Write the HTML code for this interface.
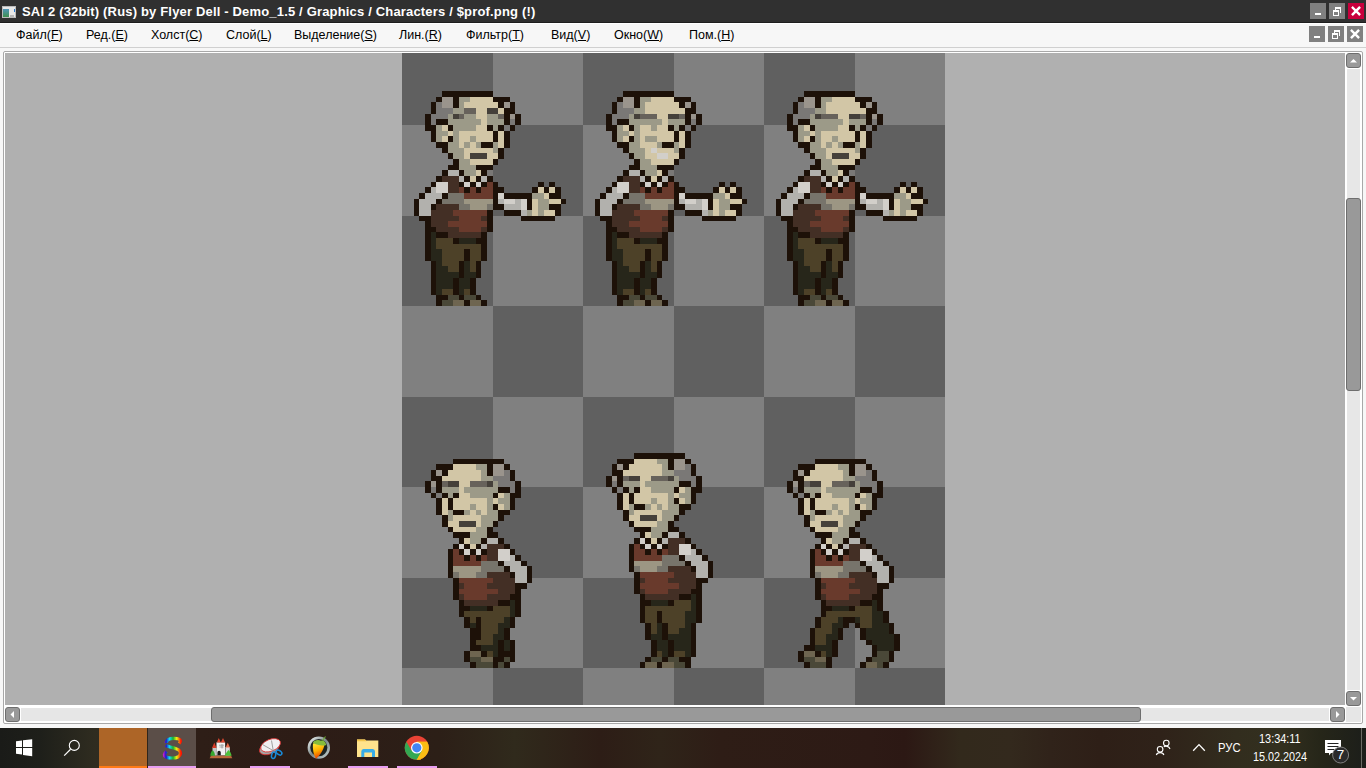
<!DOCTYPE html>
<html><head><meta charset="utf-8">
<style>
*{margin:0;padding:0;box-sizing:border-box}
html,body{width:1366px;height:768px;overflow:hidden;background:#f7f7f7;font-family:"Liberation Sans",sans-serif}
.abs{position:absolute}
#title{left:0;top:0;width:1366px;height:23px;background:#303030}
#title .t{left:22px;top:4px;color:#fff;font-weight:bold;font-size:13px;white-space:nowrap;letter-spacing:0.17px}
.tb{top:3px;width:16px;height:16px;background:#808080}
#menu{left:0;top:22px;width:1366px;height:706px;background:#f7f7f7}
.mi{top:28px;font-size:12.5px;color:#000;white-space:nowrap}
.mb{top:26px;width:16px;height:16px;background:#808080}
#taskbar{left:0;top:728px;width:1366px;height:40px;
background:linear-gradient(90deg,#1a1b18 0.00%,#1e1f1a 2.93%,#2f2c20 6.95%,#2e1e17 14.64%,#2d1c16 21.96%,#2c1f17 32.21%,#302a1c 37.70%,#2d1d16 43.92%,#2f2419 48.32%,#2e1d16 52.71%,#2d1a15 63.69%,#2c1814 66.25%,#32291c 70.28%,#33291d 73.94%,#30231a 76.87%,#2e1f17 80.53%,#2f2219 84.92%,#322d1e 90.48%,#33301f 93.70%,#262619 96.63%,#1c1e1a 100.00%)}
.ul{top:766px;height:2px;background:#e79ef2}
.tray{color:#fff;font-size:12px;white-space:nowrap}
</style></head><body>
<div id="menu" class="abs"></div>
<div id="title" class="abs">
  <div class="abs" style="left:2px;top:6px;width:14px;height:12px;background:#e8e8e8;border:1px solid #bbb"></div>
  <div class="abs" style="left:3px;top:9px;width:6px;height:8px;background:linear-gradient(#4f95b8,#3f9050)"></div><div class="abs" style="left:10px;top:15px;width:4px;height:2px;background:#b8b8b8"></div><div class="abs" style="left:14px;top:9px;width:1px;height:3px;background:#2a7ad0"></div>
  <div class="abs" style="left:0;top:22px;width:1366px;height:1px;background:#1e1e1e"></div>
  <div class="abs t">SAI 2 (32bit) (Rus) by Flyer Dell - Demo_1.5 / Graphics / Characters / $prof.png (!)</div>
  <div class="abs tb" style="left:1310px"><div class="abs" style="left:5px;top:10px;width:6px;height:2px;background:#fff"></div></div>
  <div class="abs tb" style="left:1329px"><svg class="abs" style="left:0;top:0" width="16" height="16"><path fill="#fff" fill-rule="evenodd" d="M6 4H12V10H11V6H7V7H6Z"/><path fill="#fff" fill-rule="evenodd" d="M4 7H10V13H4ZM5 9V12H9V9Z"/></svg></div>
  <div class="abs tb" style="left:1348px;width:16px;background:#c8003c"><svg class="abs" style="left:0;top:0" width="16" height="16"><path d="M4.8 4.8L11.2 11.2M11.2 4.8L4.8 11.2" stroke="#fff" stroke-width="2.4" stroke-linecap="square"/></svg></div>
</div>
<!-- menu items -->
<div class="abs mi" style="left:16px">Файл(<u>F</u>)</div>
<div class="abs mi" style="left:86px">Ред.(<u>E</u>)</div>
<div class="abs mi" style="left:151px">Холст(<u>C</u>)</div>
<div class="abs mi" style="left:226px">Слой(<u>L</u>)</div>
<div class="abs mi" style="left:294px">Выделение(<u>S</u>)</div>
<div class="abs mi" style="left:399px">Лин.(<u>R</u>)</div>
<div class="abs mi" style="left:466px">Фильтр(<u>T</u>)</div>
<div class="abs mi" style="left:551px">Вид(<u>V</u>)</div>
<div class="abs mi" style="left:614px">Окно(<u>W</u>)</div>
<div class="abs mi" style="left:689px">Пом.(<u>H</u>)</div>
<div class="abs mb" style="left:1309px"><div class="abs" style="left:5px;top:10px;width:6px;height:2px;background:#fff"></div></div>
<div class="abs mb" style="left:1328px"><svg class="abs" style="left:0;top:0" width="16" height="16"><path fill="#fff" fill-rule="evenodd" d="M6 4H12V10H11V6H7V7H6Z"/><path fill="#fff" fill-rule="evenodd" d="M4 7H10V13H4ZM5 9V12H9V9Z"/></svg></div>
<div class="abs mb" style="left:1347px"><svg class="abs" style="left:0;top:0" width="16" height="16"><path d="M4.8 4.8L11.2 11.2M11.2 4.8L4.8 11.2" stroke="#fff" stroke-width="2.4" stroke-linecap="square"/></svg></div>
<div class="abs" style="left:0;top:23px;width:1366px;height:1px;background:#fff"></div>
<div class="abs" style="left:0;top:47px;width:1366px;height:1px;background:#d0d0d0"></div>
<!-- frame -->
<div class="abs" style="left:3px;top:51px;width:1360px;height:673px;border:1px solid #a8a8a8;border-radius:2px;background:#fff"></div>
<div id="canvas" class="abs" style="left:5px;top:53px;width:1340px;height:652px;background:#b0b0b0;overflow:hidden">
  <svg id="art" class="abs" style="left:397px;top:-19px" width="543" height="724" viewBox="0 0 96 128" shape-rendering="crispEdges">
    <defs><pattern id="chk" width="32" height="32" patternUnits="userSpaceOnUse">
      <rect width="32" height="32" fill="#808080"/><rect width="16" height="16" fill="#606060"/><rect x="16" y="16" width="16" height="16" fill="#606060"/></pattern></defs>
    <g transform="translate(0.0442 0.0884)"><rect width="96" height="128" fill="#808080"/><rect x="0" y="0" width="16" height="16" fill="#606060"/><rect x="32" y="0" width="16" height="16" fill="#606060"/><rect x="64" y="0" width="16" height="16" fill="#606060"/><rect x="16" y="16" width="16" height="16" fill="#606060"/><rect x="48" y="16" width="16" height="16" fill="#606060"/><rect x="80" y="16" width="16" height="16" fill="#606060"/><rect x="0" y="32" width="16" height="16" fill="#606060"/><rect x="32" y="32" width="16" height="16" fill="#606060"/><rect x="64" y="32" width="16" height="16" fill="#606060"/><rect x="16" y="48" width="16" height="16" fill="#606060"/><rect x="48" y="48" width="16" height="16" fill="#606060"/><rect x="80" y="48" width="16" height="16" fill="#606060"/><rect x="0" y="64" width="16" height="16" fill="#606060"/><rect x="32" y="64" width="16" height="16" fill="#606060"/><rect x="64" y="64" width="16" height="16" fill="#606060"/><rect x="16" y="80" width="16" height="16" fill="#606060"/><rect x="48" y="80" width="16" height="16" fill="#606060"/><rect x="80" y="80" width="16" height="16" fill="#606060"/><rect x="0" y="96" width="16" height="16" fill="#606060"/><rect x="32" y="96" width="16" height="16" fill="#606060"/><rect x="64" y="96" width="16" height="16" fill="#606060"/><rect x="16" y="112" width="16" height="16" fill="#606060"/><rect x="48" y="112" width="16" height="16" fill="#606060"/><rect x="80" y="112" width="16" height="16" fill="#606060"/>
    <g id="sprites">
<rect x="7" y="10" width="9" height="1" fill="#1d1108"/>
<rect x="6" y="11" width="1" height="1" fill="#1d1108"/>
<rect x="7" y="11" width="2" height="1" fill="#9a948c"/>
<rect x="9" y="11" width="1" height="1" fill="#1d1108"/>
<rect x="10" y="11" width="2" height="1" fill="#9c9a88"/>
<rect x="12" y="11" width="4" height="1" fill="#d2c6a6"/>
<rect x="16" y="11" width="3" height="1" fill="#1d1108"/>
<rect x="5" y="12" width="1" height="1" fill="#1d1108"/>
<rect x="6" y="12" width="1" height="1" fill="#7a7876"/>
<rect x="7" y="12" width="2" height="1" fill="#9a948c"/>
<rect x="9" y="12" width="1" height="1" fill="#1d1108"/>
<rect x="10" y="12" width="1" height="1" fill="#9c9a88"/>
<rect x="11" y="12" width="6" height="1" fill="#d2c6a6"/>
<rect x="17" y="12" width="1" height="1" fill="#1d1108"/>
<rect x="18" y="12" width="1" height="1" fill="#9a948c"/>
<rect x="19" y="12" width="1" height="1" fill="#1d1108"/>
<rect x="5" y="13" width="1" height="1" fill="#1d1108"/>
<rect x="6" y="13" width="3" height="1" fill="#7a7876"/>
<rect x="9" y="13" width="2" height="1" fill="#9c9a88"/>
<rect x="11" y="13" width="2" height="1" fill="#67625b"/>
<rect x="13" y="13" width="2" height="1" fill="#d2c6a6"/>
<rect x="15" y="13" width="2" height="1" fill="#45403a"/>
<rect x="17" y="13" width="1" height="1" fill="#d2c6a6"/>
<rect x="18" y="13" width="2" height="1" fill="#1d1108"/>
<rect x="4" y="14" width="1" height="1" fill="#1d1108"/>
<rect x="5" y="14" width="3" height="1" fill="#7a7876"/>
<rect x="8" y="14" width="1" height="1" fill="#9c9a88"/>
<rect x="9" y="14" width="1" height="1" fill="#45403a"/>
<rect x="10" y="14" width="1" height="1" fill="#67625b"/>
<rect x="11" y="14" width="2" height="1" fill="#9c9a88"/>
<rect x="13" y="14" width="2" height="1" fill="#d2c6a6"/>
<rect x="15" y="14" width="2" height="1" fill="#9c9a88"/>
<rect x="17" y="14" width="1" height="1" fill="#67625b"/>
<rect x="18" y="14" width="1" height="1" fill="#1d1108"/>
<rect x="19" y="14" width="1" height="1" fill="#9a948c"/>
<rect x="20" y="14" width="1" height="1" fill="#1d1108"/>
<rect x="4" y="15" width="1" height="1" fill="#1d1108"/>
<rect x="5" y="15" width="1" height="1" fill="#7a7876"/>
<rect x="6" y="15" width="2" height="1" fill="#1d1108"/>
<rect x="8" y="15" width="6" height="1" fill="#9c9a88"/>
<rect x="14" y="15" width="1" height="1" fill="#d2c6a6"/>
<rect x="15" y="15" width="3" height="1" fill="#9c9a88"/>
<rect x="18" y="15" width="1" height="1" fill="#1d1108"/>
<rect x="19" y="15" width="1" height="1" fill="#7a7876"/>
<rect x="20" y="15" width="1" height="1" fill="#1d1108"/>
<rect x="4" y="16" width="2" height="1" fill="#1d1108"/>
<rect x="6" y="16" width="1" height="1" fill="#9c9a88"/>
<rect x="7" y="16" width="1" height="1" fill="#d2c6a6"/>
<rect x="8" y="16" width="1" height="1" fill="#1d1108"/>
<rect x="9" y="16" width="4" height="1" fill="#9c9a88"/>
<rect x="13" y="16" width="2" height="1" fill="#d2c6a6"/>
<rect x="15" y="16" width="1" height="1" fill="#1d1108"/>
<rect x="16" y="16" width="1" height="1" fill="#9c9a88"/>
<rect x="17" y="16" width="1" height="1" fill="#1d1108"/>
<rect x="18" y="16" width="1" height="1" fill="#7a7876"/>
<rect x="19" y="16" width="1" height="1" fill="#1d1108"/>
<rect x="5" y="17" width="1" height="1" fill="#1d1108"/>
<rect x="6" y="17" width="2" height="1" fill="#9c9a88"/>
<rect x="8" y="17" width="1" height="1" fill="#d2c6a6"/>
<rect x="9" y="17" width="1" height="1" fill="#9c9a88"/>
<rect x="10" y="17" width="6" height="1" fill="#d2c6a6"/>
<rect x="16" y="17" width="1" height="1" fill="#1d1108"/>
<rect x="17" y="17" width="1" height="1" fill="#d2c6a6"/>
<rect x="18" y="17" width="1" height="1" fill="#1d1108"/>
<rect x="5" y="18" width="1" height="1" fill="#1d1108"/>
<rect x="6" y="18" width="1" height="1" fill="#9c9a88"/>
<rect x="7" y="18" width="1" height="1" fill="#d2c6a6"/>
<rect x="8" y="18" width="1" height="1" fill="#1d1108"/>
<rect x="9" y="18" width="1" height="1" fill="#9c9a88"/>
<rect x="10" y="18" width="2" height="1" fill="#d2c6a6"/>
<rect x="12" y="18" width="1" height="1" fill="#9c9a88"/>
<rect x="13" y="18" width="3" height="1" fill="#d2c6a6"/>
<rect x="16" y="18" width="1" height="1" fill="#1d1108"/>
<rect x="17" y="18" width="1" height="1" fill="#d2c6a6"/>
<rect x="18" y="18" width="1" height="1" fill="#1d1108"/>
<rect x="6" y="19" width="2" height="1" fill="#1d1108"/>
<rect x="8" y="19" width="2" height="1" fill="#9c9a88"/>
<rect x="10" y="19" width="1" height="1" fill="#d2c6a6"/>
<rect x="11" y="19" width="1" height="1" fill="#9c9a88"/>
<rect x="12" y="19" width="1" height="1" fill="#d2c6a6"/>
<rect x="13" y="19" width="1" height="1" fill="#9c9a88"/>
<rect x="14" y="19" width="2" height="1" fill="#1d1108"/>
<rect x="16" y="19" width="1" height="1" fill="#9c9a88"/>
<rect x="17" y="19" width="1" height="1" fill="#d2c6a6"/>
<rect x="18" y="19" width="1" height="1" fill="#1d1108"/>
<rect x="7" y="20" width="1" height="1" fill="#1d1108"/>
<rect x="8" y="20" width="3" height="1" fill="#9c9a88"/>
<rect x="11" y="20" width="5" height="1" fill="#d2c6a6"/>
<rect x="16" y="20" width="1" height="1" fill="#9c9a88"/>
<rect x="17" y="20" width="1" height="1" fill="#1d1108"/>
<rect x="8" y="21" width="1" height="1" fill="#1d1108"/>
<rect x="9" y="21" width="2" height="1" fill="#9c9a88"/>
<rect x="11" y="21" width="1" height="1" fill="#d2c6a6"/>
<rect x="12" y="21" width="3" height="1" fill="#45403a"/>
<rect x="15" y="21" width="2" height="1" fill="#d2c6a6"/>
<rect x="17" y="21" width="1" height="1" fill="#1d1108"/>
<rect x="9" y="22" width="1" height="1" fill="#1d1108"/>
<rect x="10" y="22" width="2" height="1" fill="#9c9a88"/>
<rect x="12" y="22" width="4" height="1" fill="#d2c6a6"/>
<rect x="16" y="22" width="1" height="1" fill="#1d1108"/>
<rect x="8" y="23" width="2" height="1" fill="#1d1108"/>
<rect x="10" y="23" width="3" height="1" fill="#9c9a88"/>
<rect x="13" y="23" width="3" height="1" fill="#1d1108"/>
<rect x="7" y="24" width="1" height="1" fill="#1d1108"/>
<rect x="8" y="24" width="2" height="1" fill="#b2b1ad"/>
<rect x="10" y="24" width="1" height="1" fill="#1d1108"/>
<rect x="11" y="24" width="2" height="1" fill="#9c9a88"/>
<rect x="13" y="24" width="1" height="1" fill="#d2c6a6"/>
<rect x="14" y="24" width="1" height="1" fill="#1d1108"/>
<rect x="15" y="24" width="1" height="1" fill="#7a7876"/>
<rect x="6" y="25" width="1" height="1" fill="#1d1108"/>
<rect x="7" y="25" width="3" height="1" fill="#432f25"/>
<rect x="10" y="25" width="1" height="1" fill="#b2b1ad"/>
<rect x="11" y="25" width="1" height="1" fill="#1d1108"/>
<rect x="12" y="25" width="1" height="1" fill="#d2c6a6"/>
<rect x="13" y="25" width="1" height="1" fill="#1d1108"/>
<rect x="14" y="25" width="1" height="1" fill="#b2b1ad"/>
<rect x="15" y="25" width="1" height="1" fill="#1d1108"/>
<rect x="5" y="26" width="1" height="1" fill="#1d1108"/>
<rect x="6" y="26" width="2" height="1" fill="#d2cfca"/>
<rect x="8" y="26" width="2" height="1" fill="#432f25"/>
<rect x="10" y="26" width="1" height="1" fill="#1d1108"/>
<rect x="11" y="26" width="1" height="1" fill="#d2cfca"/>
<rect x="12" y="26" width="1" height="1" fill="#1d1108"/>
<rect x="13" y="26" width="1" height="1" fill="#d2cfca"/>
<rect x="14" y="26" width="1" height="1" fill="#1d1108"/>
<rect x="15" y="26" width="1" height="1" fill="#693a2c"/>
<rect x="16" y="26" width="1" height="1" fill="#1d1108"/>
<rect x="24" y="26" width="1" height="1" fill="#1d1108"/>
<rect x="26" y="26" width="1" height="1" fill="#1d1108"/>
<rect x="4" y="27" width="1" height="1" fill="#1d1108"/>
<rect x="5" y="27" width="1" height="1" fill="#b2b1ad"/>
<rect x="6" y="27" width="2" height="1" fill="#d2cfca"/>
<rect x="8" y="27" width="2" height="1" fill="#432f25"/>
<rect x="10" y="27" width="1" height="1" fill="#693a2c"/>
<rect x="11" y="27" width="1" height="1" fill="#1d1108"/>
<rect x="12" y="27" width="1" height="1" fill="#693a2c"/>
<rect x="13" y="27" width="1" height="1" fill="#1d1108"/>
<rect x="14" y="27" width="2" height="1" fill="#693a2c"/>
<rect x="16" y="27" width="2" height="1" fill="#1d1108"/>
<rect x="23" y="27" width="1" height="1" fill="#1d1108"/>
<rect x="24" y="27" width="1" height="1" fill="#d2c6a6"/>
<rect x="25" y="27" width="1" height="1" fill="#1d1108"/>
<rect x="26" y="27" width="1" height="1" fill="#d2c6a6"/>
<rect x="27" y="27" width="1" height="1" fill="#1d1108"/>
<rect x="3" y="28" width="1" height="1" fill="#1d1108"/>
<rect x="4" y="28" width="3" height="1" fill="#b2b1ad"/>
<rect x="7" y="28" width="1" height="1" fill="#1d1108"/>
<rect x="8" y="28" width="3" height="1" fill="#77746b"/>
<rect x="11" y="28" width="5" height="1" fill="#693a2c"/>
<rect x="16" y="28" width="1" height="1" fill="#1d1108"/>
<rect x="17" y="28" width="1" height="1" fill="#d2cfca"/>
<rect x="18" y="28" width="5" height="1" fill="#1d1108"/>
<rect x="23" y="28" width="2" height="1" fill="#9c9a88"/>
<rect x="25" y="28" width="1" height="1" fill="#d2c6a6"/>
<rect x="26" y="28" width="2" height="1" fill="#1d1108"/>
<rect x="2" y="29" width="1" height="1" fill="#1d1108"/>
<rect x="3" y="29" width="3" height="1" fill="#b2b1ad"/>
<rect x="6" y="29" width="1" height="1" fill="#1d1108"/>
<rect x="7" y="29" width="4" height="1" fill="#77746b"/>
<rect x="11" y="29" width="5" height="1" fill="#9c9683"/>
<rect x="16" y="29" width="1" height="1" fill="#1d1108"/>
<rect x="17" y="29" width="1" height="1" fill="#b2b1ad"/>
<rect x="18" y="29" width="2" height="1" fill="#d2cfca"/>
<rect x="20" y="29" width="1" height="1" fill="#b2b1ad"/>
<rect x="21" y="29" width="1" height="1" fill="#d2cfca"/>
<rect x="22" y="29" width="1" height="1" fill="#1d1108"/>
<rect x="23" y="29" width="1" height="1" fill="#d2c6a6"/>
<rect x="24" y="29" width="2" height="1" fill="#9c9a88"/>
<rect x="26" y="29" width="2" height="1" fill="#d2c6a6"/>
<rect x="28" y="29" width="1" height="1" fill="#1d1108"/>
<rect x="2" y="30" width="1" height="1" fill="#1d1108"/>
<rect x="3" y="30" width="2" height="1" fill="#b2b1ad"/>
<rect x="5" y="30" width="1" height="1" fill="#1d1108"/>
<rect x="6" y="30" width="4" height="1" fill="#432f25"/>
<rect x="10" y="30" width="2" height="1" fill="#77746b"/>
<rect x="12" y="30" width="3" height="1" fill="#9c9683"/>
<rect x="15" y="30" width="1" height="1" fill="#77746b"/>
<rect x="16" y="30" width="2" height="1" fill="#1d1108"/>
<rect x="18" y="30" width="3" height="1" fill="#b2b1ad"/>
<rect x="21" y="30" width="1" height="1" fill="#d2cfca"/>
<rect x="22" y="30" width="1" height="1" fill="#1d1108"/>
<rect x="23" y="30" width="1" height="1" fill="#d2c6a6"/>
<rect x="24" y="30" width="2" height="1" fill="#9c9a88"/>
<rect x="26" y="30" width="2" height="1" fill="#1d1108"/>
<rect x="2" y="31" width="1" height="1" fill="#1d1108"/>
<rect x="3" y="31" width="2" height="1" fill="#b2b1ad"/>
<rect x="5" y="31" width="4" height="1" fill="#432f25"/>
<rect x="9" y="31" width="6" height="1" fill="#693a2c"/>
<rect x="15" y="31" width="1" height="1" fill="#1d1108"/>
<rect x="18" y="31" width="3" height="1" fill="#1d1108"/>
<rect x="21" y="31" width="1" height="1" fill="#b2b1ad"/>
<rect x="22" y="31" width="1" height="1" fill="#9c9a88"/>
<rect x="23" y="31" width="1" height="1" fill="#d2c6a6"/>
<rect x="24" y="31" width="1" height="1" fill="#9c9a88"/>
<rect x="25" y="31" width="2" height="1" fill="#d2c6a6"/>
<rect x="27" y="31" width="1" height="1" fill="#1d1108"/>
<rect x="3" y="32" width="2" height="1" fill="#1d1108"/>
<rect x="5" y="32" width="5" height="1" fill="#432f25"/>
<rect x="10" y="32" width="4" height="1" fill="#693a2c"/>
<rect x="14" y="32" width="1" height="1" fill="#432f25"/>
<rect x="15" y="32" width="1" height="1" fill="#1d1108"/>
<rect x="21" y="32" width="6" height="1" fill="#1d1108"/>
<rect x="4" y="33" width="1" height="1" fill="#1d1108"/>
<rect x="5" y="33" width="3" height="1" fill="#432f25"/>
<rect x="8" y="33" width="7" height="1" fill="#693a2c"/>
<rect x="15" y="33" width="1" height="1" fill="#1d1108"/>
<rect x="4" y="34" width="2" height="1" fill="#1d1108"/>
<rect x="6" y="34" width="4" height="1" fill="#432f25"/>
<rect x="10" y="34" width="4" height="1" fill="#693a2c"/>
<rect x="14" y="34" width="1" height="1" fill="#432f25"/>
<rect x="15" y="34" width="1" height="1" fill="#1d1108"/>
<rect x="4" y="35" width="1" height="1" fill="#1d1108"/>
<rect x="5" y="35" width="1" height="1" fill="#27261a"/>
<rect x="6" y="35" width="2" height="1" fill="#1d1108"/>
<rect x="8" y="35" width="6" height="1" fill="#432f25"/>
<rect x="14" y="35" width="1" height="1" fill="#1d1108"/>
<rect x="4" y="36" width="1" height="1" fill="#1d1108"/>
<rect x="5" y="36" width="1" height="1" fill="#27261a"/>
<rect x="6" y="36" width="3" height="1" fill="#4d4128"/>
<rect x="9" y="36" width="1" height="1" fill="#1d1108"/>
<rect x="10" y="36" width="3" height="1" fill="#27261a"/>
<rect x="13" y="36" width="2" height="1" fill="#1d1108"/>
<rect x="4" y="37" width="1" height="1" fill="#1d1108"/>
<rect x="5" y="37" width="1" height="1" fill="#27261a"/>
<rect x="6" y="37" width="8" height="1" fill="#4d4128"/>
<rect x="14" y="37" width="1" height="1" fill="#1d1108"/>
<rect x="4" y="38" width="1" height="1" fill="#1d1108"/>
<rect x="5" y="38" width="2" height="1" fill="#27261a"/>
<rect x="7" y="38" width="4" height="1" fill="#4d4128"/>
<rect x="11" y="38" width="1" height="1" fill="#1d1108"/>
<rect x="12" y="38" width="2" height="1" fill="#4d4128"/>
<rect x="14" y="38" width="1" height="1" fill="#1d1108"/>
<rect x="4" y="39" width="1" height="1" fill="#1d1108"/>
<rect x="5" y="39" width="2" height="1" fill="#27261a"/>
<rect x="7" y="39" width="4" height="1" fill="#4d4128"/>
<rect x="11" y="39" width="1" height="1" fill="#1d1108"/>
<rect x="12" y="39" width="2" height="1" fill="#4d4128"/>
<rect x="14" y="39" width="1" height="1" fill="#1d1108"/>
<rect x="5" y="40" width="1" height="1" fill="#1d1108"/>
<rect x="6" y="40" width="1" height="1" fill="#27261a"/>
<rect x="7" y="40" width="3" height="1" fill="#4d4128"/>
<rect x="10" y="40" width="1" height="1" fill="#1d1108"/>
<rect x="11" y="40" width="1" height="1" fill="#27261a"/>
<rect x="12" y="40" width="1" height="1" fill="#4d4128"/>
<rect x="13" y="40" width="1" height="1" fill="#1d1108"/>
<rect x="5" y="41" width="1" height="1" fill="#1d1108"/>
<rect x="6" y="41" width="2" height="1" fill="#27261a"/>
<rect x="8" y="41" width="2" height="1" fill="#4d4128"/>
<rect x="10" y="41" width="1" height="1" fill="#1d1108"/>
<rect x="11" y="41" width="1" height="1" fill="#27261a"/>
<rect x="12" y="41" width="1" height="1" fill="#4d4128"/>
<rect x="13" y="41" width="1" height="1" fill="#1d1108"/>
<rect x="5" y="42" width="1" height="1" fill="#1d1108"/>
<rect x="6" y="42" width="4" height="1" fill="#27261a"/>
<rect x="10" y="42" width="1" height="1" fill="#1d1108"/>
<rect x="11" y="42" width="2" height="1" fill="#27261a"/>
<rect x="13" y="42" width="1" height="1" fill="#1d1108"/>
<rect x="5" y="43" width="1" height="1" fill="#1d1108"/>
<rect x="6" y="43" width="3" height="1" fill="#27261a"/>
<rect x="9" y="43" width="1" height="1" fill="#1d1108"/>
<rect x="10" y="43" width="2" height="1" fill="#27261a"/>
<rect x="12" y="43" width="1" height="1" fill="#1d1108"/>
<rect x="5" y="44" width="1" height="1" fill="#1d1108"/>
<rect x="6" y="44" width="3" height="1" fill="#27261a"/>
<rect x="9" y="44" width="1" height="1" fill="#1d1108"/>
<rect x="10" y="44" width="2" height="1" fill="#27261a"/>
<rect x="12" y="44" width="1" height="1" fill="#1d1108"/>
<rect x="5" y="45" width="1" height="1" fill="#1d1108"/>
<rect x="6" y="45" width="1" height="1" fill="#27261a"/>
<rect x="7" y="45" width="2" height="1" fill="#4d4128"/>
<rect x="9" y="45" width="1" height="1" fill="#1d1108"/>
<rect x="10" y="45" width="1" height="1" fill="#27261a"/>
<rect x="11" y="45" width="1" height="1" fill="#4d4128"/>
<rect x="12" y="45" width="1" height="1" fill="#1d1108"/>
<rect x="6" y="46" width="2" height="1" fill="#1d1108"/>
<rect x="8" y="46" width="2" height="1" fill="#4a4838"/>
<rect x="10" y="46" width="1" height="1" fill="#1d1108"/>
<rect x="11" y="46" width="2" height="1" fill="#4a4838"/>
<rect x="13" y="46" width="1" height="1" fill="#1d1108"/>
<rect x="6" y="47" width="1" height="1" fill="#1d1108"/>
<rect x="7" y="47" width="2" height="1" fill="#4a4838"/>
<rect x="9" y="47" width="2" height="1" fill="#6e6550"/>
<rect x="11" y="47" width="1" height="1" fill="#1d1108"/>
<rect x="12" y="47" width="2" height="1" fill="#6e6550"/>
<rect x="14" y="47" width="1" height="1" fill="#1d1108"/>
<rect x="39" y="10" width="9" height="1" fill="#1d1108"/>
<rect x="38" y="11" width="1" height="1" fill="#1d1108"/>
<rect x="39" y="11" width="2" height="1" fill="#9a948c"/>
<rect x="41" y="11" width="1" height="1" fill="#1d1108"/>
<rect x="42" y="11" width="2" height="1" fill="#9c9a88"/>
<rect x="44" y="11" width="4" height="1" fill="#d2c6a6"/>
<rect x="48" y="11" width="3" height="1" fill="#1d1108"/>
<rect x="37" y="12" width="1" height="1" fill="#1d1108"/>
<rect x="38" y="12" width="1" height="1" fill="#7a7876"/>
<rect x="39" y="12" width="2" height="1" fill="#9a948c"/>
<rect x="41" y="12" width="1" height="1" fill="#1d1108"/>
<rect x="42" y="12" width="1" height="1" fill="#9c9a88"/>
<rect x="43" y="12" width="6" height="1" fill="#d2c6a6"/>
<rect x="49" y="12" width="1" height="1" fill="#1d1108"/>
<rect x="50" y="12" width="1" height="1" fill="#9a948c"/>
<rect x="51" y="12" width="1" height="1" fill="#1d1108"/>
<rect x="37" y="13" width="1" height="1" fill="#1d1108"/>
<rect x="38" y="13" width="3" height="1" fill="#7a7876"/>
<rect x="41" y="13" width="2" height="1" fill="#9c9a88"/>
<rect x="43" y="13" width="7" height="1" fill="#d2c6a6"/>
<rect x="50" y="13" width="2" height="1" fill="#1d1108"/>
<rect x="36" y="14" width="1" height="1" fill="#1d1108"/>
<rect x="37" y="14" width="3" height="1" fill="#7a7876"/>
<rect x="40" y="14" width="1" height="1" fill="#9c9a88"/>
<rect x="41" y="14" width="1" height="1" fill="#45403a"/>
<rect x="42" y="14" width="3" height="1" fill="#67625b"/>
<rect x="45" y="14" width="2" height="1" fill="#d2c6a6"/>
<rect x="47" y="14" width="2" height="1" fill="#45403a"/>
<rect x="49" y="14" width="1" height="1" fill="#67625b"/>
<rect x="50" y="14" width="1" height="1" fill="#1d1108"/>
<rect x="51" y="14" width="1" height="1" fill="#9a948c"/>
<rect x="52" y="14" width="1" height="1" fill="#1d1108"/>
<rect x="36" y="15" width="1" height="1" fill="#1d1108"/>
<rect x="37" y="15" width="1" height="1" fill="#7a7876"/>
<rect x="38" y="15" width="2" height="1" fill="#1d1108"/>
<rect x="40" y="15" width="6" height="1" fill="#9c9a88"/>
<rect x="46" y="15" width="1" height="1" fill="#d2c6a6"/>
<rect x="47" y="15" width="3" height="1" fill="#9c9a88"/>
<rect x="50" y="15" width="1" height="1" fill="#1d1108"/>
<rect x="51" y="15" width="1" height="1" fill="#7a7876"/>
<rect x="52" y="15" width="1" height="1" fill="#1d1108"/>
<rect x="36" y="16" width="2" height="1" fill="#1d1108"/>
<rect x="38" y="16" width="1" height="1" fill="#9c9a88"/>
<rect x="39" y="16" width="1" height="1" fill="#d2c6a6"/>
<rect x="40" y="16" width="1" height="1" fill="#1d1108"/>
<rect x="41" y="16" width="1" height="1" fill="#9c9a88"/>
<rect x="42" y="16" width="2" height="1" fill="#d2c6a6"/>
<rect x="44" y="16" width="1" height="1" fill="#9c9a88"/>
<rect x="45" y="16" width="2" height="1" fill="#d2c6a6"/>
<rect x="47" y="16" width="1" height="1" fill="#1d1108"/>
<rect x="48" y="16" width="1" height="1" fill="#9c9a88"/>
<rect x="49" y="16" width="1" height="1" fill="#1d1108"/>
<rect x="50" y="16" width="1" height="1" fill="#7a7876"/>
<rect x="51" y="16" width="1" height="1" fill="#1d1108"/>
<rect x="37" y="17" width="1" height="1" fill="#1d1108"/>
<rect x="38" y="17" width="2" height="1" fill="#9c9a88"/>
<rect x="40" y="17" width="1" height="1" fill="#d2c6a6"/>
<rect x="41" y="17" width="1" height="1" fill="#9c9a88"/>
<rect x="42" y="17" width="6" height="1" fill="#d2c6a6"/>
<rect x="48" y="17" width="1" height="1" fill="#1d1108"/>
<rect x="49" y="17" width="1" height="1" fill="#d2c6a6"/>
<rect x="50" y="17" width="1" height="1" fill="#1d1108"/>
<rect x="37" y="18" width="1" height="1" fill="#1d1108"/>
<rect x="38" y="18" width="1" height="1" fill="#9c9a88"/>
<rect x="39" y="18" width="1" height="1" fill="#d2c6a6"/>
<rect x="40" y="18" width="1" height="1" fill="#1d1108"/>
<rect x="41" y="18" width="1" height="1" fill="#9c9a88"/>
<rect x="42" y="18" width="1" height="1" fill="#d2c6a6"/>
<rect x="43" y="18" width="2" height="1" fill="#9c9a88"/>
<rect x="45" y="18" width="3" height="1" fill="#d2c6a6"/>
<rect x="48" y="18" width="1" height="1" fill="#1d1108"/>
<rect x="49" y="18" width="1" height="1" fill="#d2c6a6"/>
<rect x="50" y="18" width="1" height="1" fill="#1d1108"/>
<rect x="38" y="19" width="2" height="1" fill="#1d1108"/>
<rect x="40" y="19" width="2" height="1" fill="#9c9a88"/>
<rect x="42" y="19" width="3" height="1" fill="#d2c6a6"/>
<rect x="45" y="19" width="1" height="1" fill="#9c9a88"/>
<rect x="46" y="19" width="2" height="1" fill="#1d1108"/>
<rect x="48" y="19" width="1" height="1" fill="#9c9a88"/>
<rect x="49" y="19" width="1" height="1" fill="#d2c6a6"/>
<rect x="50" y="19" width="1" height="1" fill="#1d1108"/>
<rect x="39" y="20" width="1" height="1" fill="#1d1108"/>
<rect x="40" y="20" width="3" height="1" fill="#9c9a88"/>
<rect x="43" y="20" width="1" height="1" fill="#d2c6a6"/>
<rect x="44" y="20" width="1" height="1" fill="#d2cfca"/>
<rect x="45" y="20" width="3" height="1" fill="#d2c6a6"/>
<rect x="48" y="20" width="1" height="1" fill="#9c9a88"/>
<rect x="49" y="20" width="1" height="1" fill="#1d1108"/>
<rect x="40" y="21" width="1" height="1" fill="#1d1108"/>
<rect x="41" y="21" width="2" height="1" fill="#9c9a88"/>
<rect x="43" y="21" width="2" height="1" fill="#d2c6a6"/>
<rect x="45" y="21" width="2" height="1" fill="#d2cfca"/>
<rect x="47" y="21" width="2" height="1" fill="#d2c6a6"/>
<rect x="49" y="21" width="1" height="1" fill="#1d1108"/>
<rect x="41" y="22" width="1" height="1" fill="#1d1108"/>
<rect x="42" y="22" width="2" height="1" fill="#9c9a88"/>
<rect x="44" y="22" width="4" height="1" fill="#d2c6a6"/>
<rect x="48" y="22" width="1" height="1" fill="#1d1108"/>
<rect x="40" y="23" width="2" height="1" fill="#1d1108"/>
<rect x="42" y="23" width="3" height="1" fill="#9c9a88"/>
<rect x="45" y="23" width="3" height="1" fill="#1d1108"/>
<rect x="39" y="24" width="1" height="1" fill="#1d1108"/>
<rect x="40" y="24" width="2" height="1" fill="#b2b1ad"/>
<rect x="42" y="24" width="1" height="1" fill="#1d1108"/>
<rect x="43" y="24" width="2" height="1" fill="#9c9a88"/>
<rect x="45" y="24" width="1" height="1" fill="#d2c6a6"/>
<rect x="46" y="24" width="1" height="1" fill="#1d1108"/>
<rect x="47" y="24" width="1" height="1" fill="#7a7876"/>
<rect x="38" y="25" width="1" height="1" fill="#1d1108"/>
<rect x="39" y="25" width="3" height="1" fill="#432f25"/>
<rect x="42" y="25" width="1" height="1" fill="#b2b1ad"/>
<rect x="43" y="25" width="1" height="1" fill="#1d1108"/>
<rect x="44" y="25" width="1" height="1" fill="#d2c6a6"/>
<rect x="45" y="25" width="1" height="1" fill="#1d1108"/>
<rect x="46" y="25" width="1" height="1" fill="#b2b1ad"/>
<rect x="47" y="25" width="1" height="1" fill="#1d1108"/>
<rect x="37" y="26" width="1" height="1" fill="#1d1108"/>
<rect x="38" y="26" width="2" height="1" fill="#d2cfca"/>
<rect x="40" y="26" width="2" height="1" fill="#432f25"/>
<rect x="42" y="26" width="1" height="1" fill="#1d1108"/>
<rect x="43" y="26" width="1" height="1" fill="#d2cfca"/>
<rect x="44" y="26" width="1" height="1" fill="#1d1108"/>
<rect x="45" y="26" width="1" height="1" fill="#d2cfca"/>
<rect x="46" y="26" width="1" height="1" fill="#1d1108"/>
<rect x="47" y="26" width="1" height="1" fill="#693a2c"/>
<rect x="48" y="26" width="1" height="1" fill="#1d1108"/>
<rect x="56" y="26" width="1" height="1" fill="#1d1108"/>
<rect x="58" y="26" width="1" height="1" fill="#1d1108"/>
<rect x="36" y="27" width="1" height="1" fill="#1d1108"/>
<rect x="37" y="27" width="1" height="1" fill="#b2b1ad"/>
<rect x="38" y="27" width="2" height="1" fill="#d2cfca"/>
<rect x="40" y="27" width="2" height="1" fill="#432f25"/>
<rect x="42" y="27" width="1" height="1" fill="#693a2c"/>
<rect x="43" y="27" width="1" height="1" fill="#1d1108"/>
<rect x="44" y="27" width="1" height="1" fill="#693a2c"/>
<rect x="45" y="27" width="1" height="1" fill="#1d1108"/>
<rect x="46" y="27" width="2" height="1" fill="#693a2c"/>
<rect x="48" y="27" width="2" height="1" fill="#1d1108"/>
<rect x="55" y="27" width="1" height="1" fill="#1d1108"/>
<rect x="56" y="27" width="1" height="1" fill="#d2c6a6"/>
<rect x="57" y="27" width="1" height="1" fill="#1d1108"/>
<rect x="58" y="27" width="1" height="1" fill="#d2c6a6"/>
<rect x="59" y="27" width="1" height="1" fill="#1d1108"/>
<rect x="35" y="28" width="1" height="1" fill="#1d1108"/>
<rect x="36" y="28" width="3" height="1" fill="#b2b1ad"/>
<rect x="39" y="28" width="1" height="1" fill="#1d1108"/>
<rect x="40" y="28" width="3" height="1" fill="#77746b"/>
<rect x="43" y="28" width="5" height="1" fill="#693a2c"/>
<rect x="48" y="28" width="1" height="1" fill="#1d1108"/>
<rect x="49" y="28" width="1" height="1" fill="#d2cfca"/>
<rect x="50" y="28" width="5" height="1" fill="#1d1108"/>
<rect x="55" y="28" width="2" height="1" fill="#9c9a88"/>
<rect x="57" y="28" width="1" height="1" fill="#d2c6a6"/>
<rect x="58" y="28" width="2" height="1" fill="#1d1108"/>
<rect x="34" y="29" width="1" height="1" fill="#1d1108"/>
<rect x="35" y="29" width="3" height="1" fill="#b2b1ad"/>
<rect x="38" y="29" width="1" height="1" fill="#1d1108"/>
<rect x="39" y="29" width="4" height="1" fill="#77746b"/>
<rect x="43" y="29" width="5" height="1" fill="#9c9683"/>
<rect x="48" y="29" width="1" height="1" fill="#1d1108"/>
<rect x="49" y="29" width="1" height="1" fill="#b2b1ad"/>
<rect x="50" y="29" width="2" height="1" fill="#d2cfca"/>
<rect x="52" y="29" width="1" height="1" fill="#b2b1ad"/>
<rect x="53" y="29" width="1" height="1" fill="#d2cfca"/>
<rect x="54" y="29" width="1" height="1" fill="#1d1108"/>
<rect x="55" y="29" width="1" height="1" fill="#d2c6a6"/>
<rect x="56" y="29" width="2" height="1" fill="#9c9a88"/>
<rect x="58" y="29" width="2" height="1" fill="#d2c6a6"/>
<rect x="60" y="29" width="1" height="1" fill="#1d1108"/>
<rect x="34" y="30" width="1" height="1" fill="#1d1108"/>
<rect x="35" y="30" width="2" height="1" fill="#b2b1ad"/>
<rect x="37" y="30" width="1" height="1" fill="#1d1108"/>
<rect x="38" y="30" width="4" height="1" fill="#432f25"/>
<rect x="42" y="30" width="2" height="1" fill="#77746b"/>
<rect x="44" y="30" width="3" height="1" fill="#9c9683"/>
<rect x="47" y="30" width="1" height="1" fill="#77746b"/>
<rect x="48" y="30" width="2" height="1" fill="#1d1108"/>
<rect x="50" y="30" width="3" height="1" fill="#b2b1ad"/>
<rect x="53" y="30" width="1" height="1" fill="#d2cfca"/>
<rect x="54" y="30" width="1" height="1" fill="#1d1108"/>
<rect x="55" y="30" width="1" height="1" fill="#d2c6a6"/>
<rect x="56" y="30" width="2" height="1" fill="#9c9a88"/>
<rect x="58" y="30" width="2" height="1" fill="#1d1108"/>
<rect x="34" y="31" width="1" height="1" fill="#1d1108"/>
<rect x="35" y="31" width="2" height="1" fill="#b2b1ad"/>
<rect x="37" y="31" width="4" height="1" fill="#432f25"/>
<rect x="41" y="31" width="6" height="1" fill="#693a2c"/>
<rect x="47" y="31" width="1" height="1" fill="#1d1108"/>
<rect x="50" y="31" width="3" height="1" fill="#1d1108"/>
<rect x="53" y="31" width="1" height="1" fill="#b2b1ad"/>
<rect x="54" y="31" width="1" height="1" fill="#9c9a88"/>
<rect x="55" y="31" width="1" height="1" fill="#d2c6a6"/>
<rect x="56" y="31" width="1" height="1" fill="#9c9a88"/>
<rect x="57" y="31" width="2" height="1" fill="#d2c6a6"/>
<rect x="59" y="31" width="1" height="1" fill="#1d1108"/>
<rect x="35" y="32" width="2" height="1" fill="#1d1108"/>
<rect x="37" y="32" width="5" height="1" fill="#432f25"/>
<rect x="42" y="32" width="4" height="1" fill="#693a2c"/>
<rect x="46" y="32" width="1" height="1" fill="#432f25"/>
<rect x="47" y="32" width="1" height="1" fill="#1d1108"/>
<rect x="53" y="32" width="6" height="1" fill="#1d1108"/>
<rect x="36" y="33" width="1" height="1" fill="#1d1108"/>
<rect x="37" y="33" width="3" height="1" fill="#432f25"/>
<rect x="40" y="33" width="7" height="1" fill="#693a2c"/>
<rect x="47" y="33" width="1" height="1" fill="#1d1108"/>
<rect x="36" y="34" width="2" height="1" fill="#1d1108"/>
<rect x="38" y="34" width="4" height="1" fill="#432f25"/>
<rect x="42" y="34" width="4" height="1" fill="#693a2c"/>
<rect x="46" y="34" width="1" height="1" fill="#432f25"/>
<rect x="47" y="34" width="1" height="1" fill="#1d1108"/>
<rect x="36" y="35" width="1" height="1" fill="#1d1108"/>
<rect x="37" y="35" width="1" height="1" fill="#27261a"/>
<rect x="38" y="35" width="2" height="1" fill="#1d1108"/>
<rect x="40" y="35" width="6" height="1" fill="#432f25"/>
<rect x="46" y="35" width="1" height="1" fill="#1d1108"/>
<rect x="36" y="36" width="1" height="1" fill="#1d1108"/>
<rect x="37" y="36" width="1" height="1" fill="#27261a"/>
<rect x="38" y="36" width="3" height="1" fill="#4d4128"/>
<rect x="41" y="36" width="1" height="1" fill="#1d1108"/>
<rect x="42" y="36" width="3" height="1" fill="#27261a"/>
<rect x="45" y="36" width="2" height="1" fill="#1d1108"/>
<rect x="36" y="37" width="1" height="1" fill="#1d1108"/>
<rect x="37" y="37" width="1" height="1" fill="#27261a"/>
<rect x="38" y="37" width="8" height="1" fill="#4d4128"/>
<rect x="46" y="37" width="1" height="1" fill="#1d1108"/>
<rect x="36" y="38" width="1" height="1" fill="#1d1108"/>
<rect x="37" y="38" width="2" height="1" fill="#27261a"/>
<rect x="39" y="38" width="4" height="1" fill="#4d4128"/>
<rect x="43" y="38" width="1" height="1" fill="#1d1108"/>
<rect x="44" y="38" width="2" height="1" fill="#4d4128"/>
<rect x="46" y="38" width="1" height="1" fill="#1d1108"/>
<rect x="36" y="39" width="1" height="1" fill="#1d1108"/>
<rect x="37" y="39" width="2" height="1" fill="#27261a"/>
<rect x="39" y="39" width="4" height="1" fill="#4d4128"/>
<rect x="43" y="39" width="1" height="1" fill="#1d1108"/>
<rect x="44" y="39" width="2" height="1" fill="#4d4128"/>
<rect x="46" y="39" width="1" height="1" fill="#1d1108"/>
<rect x="37" y="40" width="1" height="1" fill="#1d1108"/>
<rect x="38" y="40" width="1" height="1" fill="#27261a"/>
<rect x="39" y="40" width="3" height="1" fill="#4d4128"/>
<rect x="42" y="40" width="1" height="1" fill="#1d1108"/>
<rect x="43" y="40" width="1" height="1" fill="#27261a"/>
<rect x="44" y="40" width="1" height="1" fill="#4d4128"/>
<rect x="45" y="40" width="1" height="1" fill="#1d1108"/>
<rect x="37" y="41" width="1" height="1" fill="#1d1108"/>
<rect x="38" y="41" width="2" height="1" fill="#27261a"/>
<rect x="40" y="41" width="2" height="1" fill="#4d4128"/>
<rect x="42" y="41" width="1" height="1" fill="#1d1108"/>
<rect x="43" y="41" width="1" height="1" fill="#27261a"/>
<rect x="44" y="41" width="1" height="1" fill="#4d4128"/>
<rect x="45" y="41" width="1" height="1" fill="#1d1108"/>
<rect x="37" y="42" width="1" height="1" fill="#1d1108"/>
<rect x="38" y="42" width="4" height="1" fill="#27261a"/>
<rect x="42" y="42" width="1" height="1" fill="#1d1108"/>
<rect x="43" y="42" width="2" height="1" fill="#27261a"/>
<rect x="45" y="42" width="1" height="1" fill="#1d1108"/>
<rect x="37" y="43" width="1" height="1" fill="#1d1108"/>
<rect x="38" y="43" width="3" height="1" fill="#27261a"/>
<rect x="41" y="43" width="1" height="1" fill="#1d1108"/>
<rect x="42" y="43" width="2" height="1" fill="#27261a"/>
<rect x="44" y="43" width="1" height="1" fill="#1d1108"/>
<rect x="37" y="44" width="1" height="1" fill="#1d1108"/>
<rect x="38" y="44" width="3" height="1" fill="#27261a"/>
<rect x="41" y="44" width="1" height="1" fill="#1d1108"/>
<rect x="42" y="44" width="2" height="1" fill="#27261a"/>
<rect x="44" y="44" width="1" height="1" fill="#1d1108"/>
<rect x="37" y="45" width="1" height="1" fill="#1d1108"/>
<rect x="38" y="45" width="1" height="1" fill="#27261a"/>
<rect x="39" y="45" width="2" height="1" fill="#4d4128"/>
<rect x="41" y="45" width="1" height="1" fill="#1d1108"/>
<rect x="42" y="45" width="1" height="1" fill="#27261a"/>
<rect x="43" y="45" width="1" height="1" fill="#4d4128"/>
<rect x="44" y="45" width="1" height="1" fill="#1d1108"/>
<rect x="38" y="46" width="2" height="1" fill="#1d1108"/>
<rect x="40" y="46" width="2" height="1" fill="#4a4838"/>
<rect x="42" y="46" width="1" height="1" fill="#1d1108"/>
<rect x="43" y="46" width="2" height="1" fill="#4a4838"/>
<rect x="45" y="46" width="1" height="1" fill="#1d1108"/>
<rect x="38" y="47" width="1" height="1" fill="#1d1108"/>
<rect x="39" y="47" width="2" height="1" fill="#4a4838"/>
<rect x="41" y="47" width="2" height="1" fill="#6e6550"/>
<rect x="43" y="47" width="1" height="1" fill="#1d1108"/>
<rect x="44" y="47" width="2" height="1" fill="#6e6550"/>
<rect x="46" y="47" width="1" height="1" fill="#1d1108"/>
<rect x="71" y="10" width="9" height="1" fill="#1d1108"/>
<rect x="70" y="11" width="1" height="1" fill="#1d1108"/>
<rect x="71" y="11" width="2" height="1" fill="#9a948c"/>
<rect x="73" y="11" width="1" height="1" fill="#1d1108"/>
<rect x="74" y="11" width="2" height="1" fill="#9c9a88"/>
<rect x="76" y="11" width="4" height="1" fill="#d2c6a6"/>
<rect x="80" y="11" width="3" height="1" fill="#1d1108"/>
<rect x="69" y="12" width="1" height="1" fill="#1d1108"/>
<rect x="70" y="12" width="1" height="1" fill="#7a7876"/>
<rect x="71" y="12" width="2" height="1" fill="#9a948c"/>
<rect x="73" y="12" width="1" height="1" fill="#1d1108"/>
<rect x="74" y="12" width="1" height="1" fill="#9c9a88"/>
<rect x="75" y="12" width="6" height="1" fill="#d2c6a6"/>
<rect x="81" y="12" width="1" height="1" fill="#1d1108"/>
<rect x="82" y="12" width="1" height="1" fill="#9a948c"/>
<rect x="83" y="12" width="1" height="1" fill="#1d1108"/>
<rect x="69" y="13" width="1" height="1" fill="#1d1108"/>
<rect x="70" y="13" width="3" height="1" fill="#7a7876"/>
<rect x="73" y="13" width="2" height="1" fill="#9c9a88"/>
<rect x="75" y="13" width="7" height="1" fill="#d2c6a6"/>
<rect x="82" y="13" width="2" height="1" fill="#1d1108"/>
<rect x="68" y="14" width="1" height="1" fill="#1d1108"/>
<rect x="69" y="14" width="3" height="1" fill="#7a7876"/>
<rect x="72" y="14" width="1" height="1" fill="#9c9a88"/>
<rect x="73" y="14" width="1" height="1" fill="#45403a"/>
<rect x="74" y="14" width="3" height="1" fill="#67625b"/>
<rect x="77" y="14" width="2" height="1" fill="#d2c6a6"/>
<rect x="79" y="14" width="2" height="1" fill="#45403a"/>
<rect x="81" y="14" width="1" height="1" fill="#67625b"/>
<rect x="82" y="14" width="1" height="1" fill="#1d1108"/>
<rect x="83" y="14" width="1" height="1" fill="#9a948c"/>
<rect x="84" y="14" width="1" height="1" fill="#1d1108"/>
<rect x="68" y="15" width="1" height="1" fill="#1d1108"/>
<rect x="69" y="15" width="1" height="1" fill="#7a7876"/>
<rect x="70" y="15" width="2" height="1" fill="#1d1108"/>
<rect x="72" y="15" width="6" height="1" fill="#9c9a88"/>
<rect x="78" y="15" width="1" height="1" fill="#d2c6a6"/>
<rect x="79" y="15" width="3" height="1" fill="#9c9a88"/>
<rect x="82" y="15" width="1" height="1" fill="#1d1108"/>
<rect x="83" y="15" width="1" height="1" fill="#7a7876"/>
<rect x="84" y="15" width="1" height="1" fill="#1d1108"/>
<rect x="68" y="16" width="2" height="1" fill="#1d1108"/>
<rect x="70" y="16" width="1" height="1" fill="#9c9a88"/>
<rect x="71" y="16" width="1" height="1" fill="#d2c6a6"/>
<rect x="72" y="16" width="1" height="1" fill="#1d1108"/>
<rect x="73" y="16" width="4" height="1" fill="#9c9a88"/>
<rect x="77" y="16" width="2" height="1" fill="#d2c6a6"/>
<rect x="79" y="16" width="1" height="1" fill="#1d1108"/>
<rect x="80" y="16" width="1" height="1" fill="#9c9a88"/>
<rect x="81" y="16" width="1" height="1" fill="#1d1108"/>
<rect x="82" y="16" width="1" height="1" fill="#7a7876"/>
<rect x="83" y="16" width="1" height="1" fill="#1d1108"/>
<rect x="69" y="17" width="1" height="1" fill="#1d1108"/>
<rect x="70" y="17" width="2" height="1" fill="#9c9a88"/>
<rect x="72" y="17" width="1" height="1" fill="#d2c6a6"/>
<rect x="73" y="17" width="1" height="1" fill="#9c9a88"/>
<rect x="74" y="17" width="6" height="1" fill="#d2c6a6"/>
<rect x="80" y="17" width="1" height="1" fill="#1d1108"/>
<rect x="81" y="17" width="1" height="1" fill="#d2c6a6"/>
<rect x="82" y="17" width="1" height="1" fill="#1d1108"/>
<rect x="69" y="18" width="1" height="1" fill="#1d1108"/>
<rect x="70" y="18" width="1" height="1" fill="#9c9a88"/>
<rect x="71" y="18" width="1" height="1" fill="#d2c6a6"/>
<rect x="72" y="18" width="1" height="1" fill="#1d1108"/>
<rect x="73" y="18" width="1" height="1" fill="#9c9a88"/>
<rect x="74" y="18" width="2" height="1" fill="#d2c6a6"/>
<rect x="76" y="18" width="1" height="1" fill="#9c9a88"/>
<rect x="77" y="18" width="3" height="1" fill="#d2c6a6"/>
<rect x="80" y="18" width="1" height="1" fill="#1d1108"/>
<rect x="81" y="18" width="1" height="1" fill="#d2c6a6"/>
<rect x="82" y="18" width="1" height="1" fill="#1d1108"/>
<rect x="70" y="19" width="2" height="1" fill="#1d1108"/>
<rect x="72" y="19" width="2" height="1" fill="#9c9a88"/>
<rect x="74" y="19" width="1" height="1" fill="#d2c6a6"/>
<rect x="75" y="19" width="1" height="1" fill="#9c9a88"/>
<rect x="76" y="19" width="1" height="1" fill="#d2c6a6"/>
<rect x="77" y="19" width="1" height="1" fill="#9c9a88"/>
<rect x="78" y="19" width="2" height="1" fill="#1d1108"/>
<rect x="80" y="19" width="1" height="1" fill="#9c9a88"/>
<rect x="81" y="19" width="1" height="1" fill="#d2c6a6"/>
<rect x="82" y="19" width="1" height="1" fill="#1d1108"/>
<rect x="71" y="20" width="1" height="1" fill="#1d1108"/>
<rect x="72" y="20" width="3" height="1" fill="#9c9a88"/>
<rect x="75" y="20" width="5" height="1" fill="#d2c6a6"/>
<rect x="80" y="20" width="1" height="1" fill="#9c9a88"/>
<rect x="81" y="20" width="1" height="1" fill="#1d1108"/>
<rect x="72" y="21" width="1" height="1" fill="#1d1108"/>
<rect x="73" y="21" width="2" height="1" fill="#9c9a88"/>
<rect x="75" y="21" width="1" height="1" fill="#d2c6a6"/>
<rect x="76" y="21" width="3" height="1" fill="#45403a"/>
<rect x="79" y="21" width="2" height="1" fill="#d2c6a6"/>
<rect x="81" y="21" width="1" height="1" fill="#1d1108"/>
<rect x="73" y="22" width="1" height="1" fill="#1d1108"/>
<rect x="74" y="22" width="2" height="1" fill="#9c9a88"/>
<rect x="76" y="22" width="4" height="1" fill="#d2c6a6"/>
<rect x="80" y="22" width="1" height="1" fill="#1d1108"/>
<rect x="72" y="23" width="2" height="1" fill="#1d1108"/>
<rect x="74" y="23" width="3" height="1" fill="#9c9a88"/>
<rect x="77" y="23" width="3" height="1" fill="#1d1108"/>
<rect x="71" y="24" width="1" height="1" fill="#1d1108"/>
<rect x="72" y="24" width="2" height="1" fill="#b2b1ad"/>
<rect x="74" y="24" width="1" height="1" fill="#1d1108"/>
<rect x="75" y="24" width="2" height="1" fill="#9c9a88"/>
<rect x="77" y="24" width="1" height="1" fill="#d2c6a6"/>
<rect x="78" y="24" width="1" height="1" fill="#1d1108"/>
<rect x="79" y="24" width="1" height="1" fill="#7a7876"/>
<rect x="70" y="25" width="1" height="1" fill="#1d1108"/>
<rect x="71" y="25" width="3" height="1" fill="#432f25"/>
<rect x="74" y="25" width="1" height="1" fill="#b2b1ad"/>
<rect x="75" y="25" width="1" height="1" fill="#1d1108"/>
<rect x="76" y="25" width="1" height="1" fill="#d2c6a6"/>
<rect x="77" y="25" width="1" height="1" fill="#1d1108"/>
<rect x="78" y="25" width="1" height="1" fill="#b2b1ad"/>
<rect x="79" y="25" width="1" height="1" fill="#1d1108"/>
<rect x="69" y="26" width="1" height="1" fill="#1d1108"/>
<rect x="70" y="26" width="2" height="1" fill="#d2cfca"/>
<rect x="72" y="26" width="2" height="1" fill="#432f25"/>
<rect x="74" y="26" width="1" height="1" fill="#1d1108"/>
<rect x="75" y="26" width="1" height="1" fill="#d2cfca"/>
<rect x="76" y="26" width="1" height="1" fill="#1d1108"/>
<rect x="77" y="26" width="1" height="1" fill="#d2cfca"/>
<rect x="78" y="26" width="1" height="1" fill="#1d1108"/>
<rect x="79" y="26" width="1" height="1" fill="#693a2c"/>
<rect x="80" y="26" width="1" height="1" fill="#1d1108"/>
<rect x="88" y="26" width="1" height="1" fill="#1d1108"/>
<rect x="90" y="26" width="1" height="1" fill="#1d1108"/>
<rect x="68" y="27" width="1" height="1" fill="#1d1108"/>
<rect x="69" y="27" width="1" height="1" fill="#b2b1ad"/>
<rect x="70" y="27" width="2" height="1" fill="#d2cfca"/>
<rect x="72" y="27" width="2" height="1" fill="#432f25"/>
<rect x="74" y="27" width="1" height="1" fill="#693a2c"/>
<rect x="75" y="27" width="1" height="1" fill="#1d1108"/>
<rect x="76" y="27" width="1" height="1" fill="#693a2c"/>
<rect x="77" y="27" width="1" height="1" fill="#1d1108"/>
<rect x="78" y="27" width="2" height="1" fill="#693a2c"/>
<rect x="80" y="27" width="2" height="1" fill="#1d1108"/>
<rect x="87" y="27" width="1" height="1" fill="#1d1108"/>
<rect x="88" y="27" width="1" height="1" fill="#d2c6a6"/>
<rect x="89" y="27" width="1" height="1" fill="#1d1108"/>
<rect x="90" y="27" width="1" height="1" fill="#d2c6a6"/>
<rect x="91" y="27" width="1" height="1" fill="#1d1108"/>
<rect x="67" y="28" width="1" height="1" fill="#1d1108"/>
<rect x="68" y="28" width="3" height="1" fill="#b2b1ad"/>
<rect x="71" y="28" width="1" height="1" fill="#1d1108"/>
<rect x="72" y="28" width="3" height="1" fill="#77746b"/>
<rect x="75" y="28" width="5" height="1" fill="#693a2c"/>
<rect x="80" y="28" width="1" height="1" fill="#1d1108"/>
<rect x="81" y="28" width="1" height="1" fill="#d2cfca"/>
<rect x="82" y="28" width="5" height="1" fill="#1d1108"/>
<rect x="87" y="28" width="2" height="1" fill="#9c9a88"/>
<rect x="89" y="28" width="1" height="1" fill="#d2c6a6"/>
<rect x="90" y="28" width="2" height="1" fill="#1d1108"/>
<rect x="66" y="29" width="1" height="1" fill="#1d1108"/>
<rect x="67" y="29" width="3" height="1" fill="#b2b1ad"/>
<rect x="70" y="29" width="1" height="1" fill="#1d1108"/>
<rect x="71" y="29" width="4" height="1" fill="#77746b"/>
<rect x="75" y="29" width="5" height="1" fill="#9c9683"/>
<rect x="80" y="29" width="1" height="1" fill="#1d1108"/>
<rect x="81" y="29" width="1" height="1" fill="#b2b1ad"/>
<rect x="82" y="29" width="2" height="1" fill="#d2cfca"/>
<rect x="84" y="29" width="1" height="1" fill="#b2b1ad"/>
<rect x="85" y="29" width="1" height="1" fill="#d2cfca"/>
<rect x="86" y="29" width="1" height="1" fill="#1d1108"/>
<rect x="87" y="29" width="1" height="1" fill="#d2c6a6"/>
<rect x="88" y="29" width="2" height="1" fill="#9c9a88"/>
<rect x="90" y="29" width="2" height="1" fill="#d2c6a6"/>
<rect x="92" y="29" width="1" height="1" fill="#1d1108"/>
<rect x="66" y="30" width="1" height="1" fill="#1d1108"/>
<rect x="67" y="30" width="2" height="1" fill="#b2b1ad"/>
<rect x="69" y="30" width="1" height="1" fill="#1d1108"/>
<rect x="70" y="30" width="4" height="1" fill="#432f25"/>
<rect x="74" y="30" width="2" height="1" fill="#77746b"/>
<rect x="76" y="30" width="3" height="1" fill="#9c9683"/>
<rect x="79" y="30" width="1" height="1" fill="#77746b"/>
<rect x="80" y="30" width="2" height="1" fill="#1d1108"/>
<rect x="82" y="30" width="3" height="1" fill="#b2b1ad"/>
<rect x="85" y="30" width="1" height="1" fill="#d2cfca"/>
<rect x="86" y="30" width="1" height="1" fill="#1d1108"/>
<rect x="87" y="30" width="1" height="1" fill="#d2c6a6"/>
<rect x="88" y="30" width="2" height="1" fill="#9c9a88"/>
<rect x="90" y="30" width="2" height="1" fill="#1d1108"/>
<rect x="66" y="31" width="1" height="1" fill="#1d1108"/>
<rect x="67" y="31" width="2" height="1" fill="#b2b1ad"/>
<rect x="69" y="31" width="4" height="1" fill="#432f25"/>
<rect x="73" y="31" width="6" height="1" fill="#693a2c"/>
<rect x="79" y="31" width="1" height="1" fill="#1d1108"/>
<rect x="82" y="31" width="3" height="1" fill="#1d1108"/>
<rect x="85" y="31" width="1" height="1" fill="#b2b1ad"/>
<rect x="86" y="31" width="1" height="1" fill="#9c9a88"/>
<rect x="87" y="31" width="1" height="1" fill="#d2c6a6"/>
<rect x="88" y="31" width="1" height="1" fill="#9c9a88"/>
<rect x="89" y="31" width="2" height="1" fill="#d2c6a6"/>
<rect x="91" y="31" width="1" height="1" fill="#1d1108"/>
<rect x="67" y="32" width="2" height="1" fill="#1d1108"/>
<rect x="69" y="32" width="5" height="1" fill="#432f25"/>
<rect x="74" y="32" width="4" height="1" fill="#693a2c"/>
<rect x="78" y="32" width="1" height="1" fill="#432f25"/>
<rect x="79" y="32" width="1" height="1" fill="#1d1108"/>
<rect x="85" y="32" width="6" height="1" fill="#1d1108"/>
<rect x="68" y="33" width="1" height="1" fill="#1d1108"/>
<rect x="69" y="33" width="3" height="1" fill="#432f25"/>
<rect x="72" y="33" width="7" height="1" fill="#693a2c"/>
<rect x="79" y="33" width="1" height="1" fill="#1d1108"/>
<rect x="68" y="34" width="2" height="1" fill="#1d1108"/>
<rect x="70" y="34" width="4" height="1" fill="#432f25"/>
<rect x="74" y="34" width="4" height="1" fill="#693a2c"/>
<rect x="78" y="34" width="1" height="1" fill="#432f25"/>
<rect x="79" y="34" width="1" height="1" fill="#1d1108"/>
<rect x="68" y="35" width="1" height="1" fill="#1d1108"/>
<rect x="69" y="35" width="1" height="1" fill="#27261a"/>
<rect x="70" y="35" width="2" height="1" fill="#1d1108"/>
<rect x="72" y="35" width="6" height="1" fill="#432f25"/>
<rect x="78" y="35" width="1" height="1" fill="#1d1108"/>
<rect x="68" y="36" width="1" height="1" fill="#1d1108"/>
<rect x="69" y="36" width="1" height="1" fill="#27261a"/>
<rect x="70" y="36" width="3" height="1" fill="#4d4128"/>
<rect x="73" y="36" width="1" height="1" fill="#1d1108"/>
<rect x="74" y="36" width="3" height="1" fill="#27261a"/>
<rect x="77" y="36" width="2" height="1" fill="#1d1108"/>
<rect x="68" y="37" width="1" height="1" fill="#1d1108"/>
<rect x="69" y="37" width="1" height="1" fill="#27261a"/>
<rect x="70" y="37" width="8" height="1" fill="#4d4128"/>
<rect x="78" y="37" width="1" height="1" fill="#1d1108"/>
<rect x="68" y="38" width="1" height="1" fill="#1d1108"/>
<rect x="69" y="38" width="2" height="1" fill="#27261a"/>
<rect x="71" y="38" width="4" height="1" fill="#4d4128"/>
<rect x="75" y="38" width="1" height="1" fill="#1d1108"/>
<rect x="76" y="38" width="2" height="1" fill="#4d4128"/>
<rect x="78" y="38" width="1" height="1" fill="#1d1108"/>
<rect x="68" y="39" width="1" height="1" fill="#1d1108"/>
<rect x="69" y="39" width="2" height="1" fill="#27261a"/>
<rect x="71" y="39" width="4" height="1" fill="#4d4128"/>
<rect x="75" y="39" width="1" height="1" fill="#1d1108"/>
<rect x="76" y="39" width="2" height="1" fill="#4d4128"/>
<rect x="78" y="39" width="1" height="1" fill="#1d1108"/>
<rect x="69" y="40" width="1" height="1" fill="#1d1108"/>
<rect x="70" y="40" width="1" height="1" fill="#27261a"/>
<rect x="71" y="40" width="3" height="1" fill="#4d4128"/>
<rect x="74" y="40" width="1" height="1" fill="#1d1108"/>
<rect x="75" y="40" width="1" height="1" fill="#27261a"/>
<rect x="76" y="40" width="1" height="1" fill="#4d4128"/>
<rect x="77" y="40" width="1" height="1" fill="#1d1108"/>
<rect x="69" y="41" width="1" height="1" fill="#1d1108"/>
<rect x="70" y="41" width="2" height="1" fill="#27261a"/>
<rect x="72" y="41" width="2" height="1" fill="#4d4128"/>
<rect x="74" y="41" width="1" height="1" fill="#1d1108"/>
<rect x="75" y="41" width="1" height="1" fill="#27261a"/>
<rect x="76" y="41" width="1" height="1" fill="#4d4128"/>
<rect x="77" y="41" width="1" height="1" fill="#1d1108"/>
<rect x="69" y="42" width="1" height="1" fill="#1d1108"/>
<rect x="70" y="42" width="4" height="1" fill="#27261a"/>
<rect x="74" y="42" width="1" height="1" fill="#1d1108"/>
<rect x="75" y="42" width="2" height="1" fill="#27261a"/>
<rect x="77" y="42" width="1" height="1" fill="#1d1108"/>
<rect x="69" y="43" width="1" height="1" fill="#1d1108"/>
<rect x="70" y="43" width="3" height="1" fill="#27261a"/>
<rect x="73" y="43" width="1" height="1" fill="#1d1108"/>
<rect x="74" y="43" width="2" height="1" fill="#27261a"/>
<rect x="76" y="43" width="1" height="1" fill="#1d1108"/>
<rect x="69" y="44" width="1" height="1" fill="#1d1108"/>
<rect x="70" y="44" width="3" height="1" fill="#27261a"/>
<rect x="73" y="44" width="1" height="1" fill="#1d1108"/>
<rect x="74" y="44" width="2" height="1" fill="#27261a"/>
<rect x="76" y="44" width="1" height="1" fill="#1d1108"/>
<rect x="69" y="45" width="1" height="1" fill="#1d1108"/>
<rect x="70" y="45" width="1" height="1" fill="#27261a"/>
<rect x="71" y="45" width="2" height="1" fill="#4d4128"/>
<rect x="73" y="45" width="1" height="1" fill="#1d1108"/>
<rect x="74" y="45" width="1" height="1" fill="#27261a"/>
<rect x="75" y="45" width="1" height="1" fill="#4d4128"/>
<rect x="76" y="45" width="1" height="1" fill="#1d1108"/>
<rect x="70" y="46" width="2" height="1" fill="#1d1108"/>
<rect x="72" y="46" width="2" height="1" fill="#4a4838"/>
<rect x="74" y="46" width="1" height="1" fill="#1d1108"/>
<rect x="75" y="46" width="2" height="1" fill="#4a4838"/>
<rect x="77" y="46" width="1" height="1" fill="#1d1108"/>
<rect x="70" y="47" width="1" height="1" fill="#1d1108"/>
<rect x="71" y="47" width="2" height="1" fill="#4a4838"/>
<rect x="73" y="47" width="2" height="1" fill="#6e6550"/>
<rect x="75" y="47" width="1" height="1" fill="#1d1108"/>
<rect x="76" y="47" width="2" height="1" fill="#6e6550"/>
<rect x="78" y="47" width="1" height="1" fill="#1d1108"/>
<rect x="9" y="75" width="9" height="1" fill="#1d1108"/>
<rect x="6" y="76" width="3" height="1" fill="#1d1108"/>
<rect x="9" y="76" width="4" height="1" fill="#d2c6a6"/>
<rect x="13" y="76" width="2" height="1" fill="#9c9a88"/>
<rect x="15" y="76" width="1" height="1" fill="#1d1108"/>
<rect x="16" y="76" width="2" height="1" fill="#9a948c"/>
<rect x="18" y="76" width="1" height="1" fill="#1d1108"/>
<rect x="5" y="77" width="1" height="1" fill="#1d1108"/>
<rect x="6" y="77" width="1" height="1" fill="#9a948c"/>
<rect x="7" y="77" width="1" height="1" fill="#1d1108"/>
<rect x="8" y="77" width="6" height="1" fill="#d2c6a6"/>
<rect x="14" y="77" width="1" height="1" fill="#9c9a88"/>
<rect x="15" y="77" width="1" height="1" fill="#1d1108"/>
<rect x="16" y="77" width="2" height="1" fill="#9a948c"/>
<rect x="18" y="77" width="1" height="1" fill="#7a7876"/>
<rect x="19" y="77" width="1" height="1" fill="#1d1108"/>
<rect x="5" y="78" width="2" height="1" fill="#1d1108"/>
<rect x="7" y="78" width="7" height="1" fill="#d2c6a6"/>
<rect x="14" y="78" width="2" height="1" fill="#9c9a88"/>
<rect x="16" y="78" width="3" height="1" fill="#7a7876"/>
<rect x="19" y="78" width="1" height="1" fill="#1d1108"/>
<rect x="4" y="79" width="1" height="1" fill="#1d1108"/>
<rect x="5" y="79" width="1" height="1" fill="#9a948c"/>
<rect x="6" y="79" width="1" height="1" fill="#1d1108"/>
<rect x="7" y="79" width="1" height="1" fill="#67625b"/>
<rect x="8" y="79" width="2" height="1" fill="#45403a"/>
<rect x="10" y="79" width="2" height="1" fill="#d2c6a6"/>
<rect x="12" y="79" width="3" height="1" fill="#67625b"/>
<rect x="15" y="79" width="1" height="1" fill="#45403a"/>
<rect x="16" y="79" width="1" height="1" fill="#9c9a88"/>
<rect x="17" y="79" width="3" height="1" fill="#7a7876"/>
<rect x="20" y="79" width="1" height="1" fill="#1d1108"/>
<rect x="4" y="80" width="1" height="1" fill="#1d1108"/>
<rect x="5" y="80" width="1" height="1" fill="#7a7876"/>
<rect x="6" y="80" width="1" height="1" fill="#1d1108"/>
<rect x="7" y="80" width="3" height="1" fill="#9c9a88"/>
<rect x="10" y="80" width="1" height="1" fill="#d2c6a6"/>
<rect x="11" y="80" width="6" height="1" fill="#9c9a88"/>
<rect x="17" y="80" width="2" height="1" fill="#1d1108"/>
<rect x="19" y="80" width="1" height="1" fill="#7a7876"/>
<rect x="20" y="80" width="1" height="1" fill="#1d1108"/>
<rect x="5" y="81" width="1" height="1" fill="#1d1108"/>
<rect x="6" y="81" width="1" height="1" fill="#7a7876"/>
<rect x="7" y="81" width="1" height="1" fill="#1d1108"/>
<rect x="8" y="81" width="1" height="1" fill="#9c9a88"/>
<rect x="9" y="81" width="1" height="1" fill="#1d1108"/>
<rect x="10" y="81" width="2" height="1" fill="#d2c6a6"/>
<rect x="12" y="81" width="4" height="1" fill="#9c9a88"/>
<rect x="16" y="81" width="1" height="1" fill="#1d1108"/>
<rect x="17" y="81" width="1" height="1" fill="#d2c6a6"/>
<rect x="18" y="81" width="1" height="1" fill="#9c9a88"/>
<rect x="19" y="81" width="2" height="1" fill="#1d1108"/>
<rect x="6" y="82" width="1" height="1" fill="#1d1108"/>
<rect x="7" y="82" width="1" height="1" fill="#d2c6a6"/>
<rect x="8" y="82" width="1" height="1" fill="#1d1108"/>
<rect x="9" y="82" width="6" height="1" fill="#d2c6a6"/>
<rect x="15" y="82" width="1" height="1" fill="#9c9a88"/>
<rect x="16" y="82" width="1" height="1" fill="#d2c6a6"/>
<rect x="17" y="82" width="2" height="1" fill="#9c9a88"/>
<rect x="19" y="82" width="1" height="1" fill="#1d1108"/>
<rect x="6" y="83" width="1" height="1" fill="#1d1108"/>
<rect x="7" y="83" width="1" height="1" fill="#d2c6a6"/>
<rect x="8" y="83" width="1" height="1" fill="#1d1108"/>
<rect x="9" y="83" width="3" height="1" fill="#d2c6a6"/>
<rect x="12" y="83" width="1" height="1" fill="#9c9a88"/>
<rect x="13" y="83" width="2" height="1" fill="#d2c6a6"/>
<rect x="15" y="83" width="1" height="1" fill="#9c9a88"/>
<rect x="16" y="83" width="1" height="1" fill="#1d1108"/>
<rect x="17" y="83" width="1" height="1" fill="#d2c6a6"/>
<rect x="18" y="83" width="1" height="1" fill="#9c9a88"/>
<rect x="19" y="83" width="1" height="1" fill="#1d1108"/>
<rect x="6" y="84" width="1" height="1" fill="#1d1108"/>
<rect x="7" y="84" width="1" height="1" fill="#d2c6a6"/>
<rect x="8" y="84" width="1" height="1" fill="#9c9a88"/>
<rect x="9" y="84" width="2" height="1" fill="#1d1108"/>
<rect x="11" y="84" width="1" height="1" fill="#9c9a88"/>
<rect x="12" y="84" width="1" height="1" fill="#d2c6a6"/>
<rect x="13" y="84" width="1" height="1" fill="#9c9a88"/>
<rect x="14" y="84" width="1" height="1" fill="#d2c6a6"/>
<rect x="15" y="84" width="2" height="1" fill="#9c9a88"/>
<rect x="17" y="84" width="2" height="1" fill="#1d1108"/>
<rect x="7" y="85" width="1" height="1" fill="#1d1108"/>
<rect x="8" y="85" width="1" height="1" fill="#9c9a88"/>
<rect x="9" y="85" width="5" height="1" fill="#d2c6a6"/>
<rect x="14" y="85" width="3" height="1" fill="#9c9a88"/>
<rect x="17" y="85" width="1" height="1" fill="#1d1108"/>
<rect x="7" y="86" width="1" height="1" fill="#1d1108"/>
<rect x="8" y="86" width="2" height="1" fill="#d2c6a6"/>
<rect x="10" y="86" width="3" height="1" fill="#45403a"/>
<rect x="13" y="86" width="1" height="1" fill="#d2c6a6"/>
<rect x="14" y="86" width="2" height="1" fill="#9c9a88"/>
<rect x="16" y="86" width="1" height="1" fill="#1d1108"/>
<rect x="8" y="87" width="1" height="1" fill="#1d1108"/>
<rect x="9" y="87" width="4" height="1" fill="#d2c6a6"/>
<rect x="13" y="87" width="2" height="1" fill="#9c9a88"/>
<rect x="15" y="87" width="1" height="1" fill="#1d1108"/>
<rect x="9" y="88" width="3" height="1" fill="#1d1108"/>
<rect x="12" y="88" width="3" height="1" fill="#9c9a88"/>
<rect x="15" y="88" width="2" height="1" fill="#1d1108"/>
<rect x="10" y="89" width="1" height="1" fill="#1d1108"/>
<rect x="11" y="89" width="1" height="1" fill="#d2c6a6"/>
<rect x="12" y="89" width="2" height="1" fill="#9c9a88"/>
<rect x="14" y="89" width="1" height="1" fill="#1d1108"/>
<rect x="15" y="89" width="2" height="1" fill="#b2b1ad"/>
<rect x="17" y="89" width="1" height="1" fill="#1d1108"/>
<rect x="9" y="90" width="1" height="1" fill="#1d1108"/>
<rect x="10" y="90" width="1" height="1" fill="#d2cfca"/>
<rect x="11" y="90" width="1" height="1" fill="#1d1108"/>
<rect x="12" y="90" width="1" height="1" fill="#d2c6a6"/>
<rect x="13" y="90" width="1" height="1" fill="#1d1108"/>
<rect x="14" y="90" width="1" height="1" fill="#b2b1ad"/>
<rect x="15" y="90" width="3" height="1" fill="#432f25"/>
<rect x="18" y="90" width="1" height="1" fill="#1d1108"/>
<rect x="8" y="91" width="1" height="1" fill="#1d1108"/>
<rect x="9" y="91" width="1" height="1" fill="#693a2c"/>
<rect x="10" y="91" width="1" height="1" fill="#1d1108"/>
<rect x="11" y="91" width="1" height="1" fill="#d2cfca"/>
<rect x="12" y="91" width="1" height="1" fill="#1d1108"/>
<rect x="13" y="91" width="1" height="1" fill="#d2cfca"/>
<rect x="14" y="91" width="1" height="1" fill="#1d1108"/>
<rect x="15" y="91" width="2" height="1" fill="#432f25"/>
<rect x="17" y="91" width="2" height="1" fill="#d2cfca"/>
<rect x="19" y="91" width="1" height="1" fill="#1d1108"/>
<rect x="8" y="92" width="1" height="1" fill="#1d1108"/>
<rect x="9" y="92" width="2" height="1" fill="#693a2c"/>
<rect x="11" y="92" width="1" height="1" fill="#1d1108"/>
<rect x="12" y="92" width="1" height="1" fill="#693a2c"/>
<rect x="13" y="92" width="1" height="1" fill="#1d1108"/>
<rect x="14" y="92" width="1" height="1" fill="#693a2c"/>
<rect x="15" y="92" width="2" height="1" fill="#432f25"/>
<rect x="17" y="92" width="2" height="1" fill="#d2cfca"/>
<rect x="19" y="92" width="1" height="1" fill="#b2b1ad"/>
<rect x="20" y="92" width="1" height="1" fill="#1d1108"/>
<rect x="8" y="93" width="1" height="1" fill="#1d1108"/>
<rect x="9" y="93" width="5" height="1" fill="#693a2c"/>
<rect x="14" y="93" width="3" height="1" fill="#77746b"/>
<rect x="17" y="93" width="1" height="1" fill="#1d1108"/>
<rect x="18" y="93" width="3" height="1" fill="#b2b1ad"/>
<rect x="21" y="93" width="1" height="1" fill="#1d1108"/>
<rect x="8" y="94" width="1" height="1" fill="#1d1108"/>
<rect x="9" y="94" width="5" height="1" fill="#9c9683"/>
<rect x="14" y="94" width="4" height="1" fill="#77746b"/>
<rect x="18" y="94" width="1" height="1" fill="#1d1108"/>
<rect x="19" y="94" width="3" height="1" fill="#b2b1ad"/>
<rect x="22" y="94" width="1" height="1" fill="#1d1108"/>
<rect x="8" y="95" width="1" height="1" fill="#1d1108"/>
<rect x="9" y="95" width="1" height="1" fill="#77746b"/>
<rect x="10" y="95" width="3" height="1" fill="#9c9683"/>
<rect x="13" y="95" width="2" height="1" fill="#77746b"/>
<rect x="15" y="95" width="4" height="1" fill="#432f25"/>
<rect x="19" y="95" width="1" height="1" fill="#1d1108"/>
<rect x="20" y="95" width="2" height="1" fill="#b2b1ad"/>
<rect x="22" y="95" width="1" height="1" fill="#1d1108"/>
<rect x="9" y="96" width="1" height="1" fill="#1d1108"/>
<rect x="10" y="96" width="6" height="1" fill="#693a2c"/>
<rect x="16" y="96" width="4" height="1" fill="#432f25"/>
<rect x="20" y="96" width="2" height="1" fill="#b2b1ad"/>
<rect x="22" y="96" width="1" height="1" fill="#1d1108"/>
<rect x="9" y="97" width="1" height="1" fill="#1d1108"/>
<rect x="10" y="97" width="1" height="1" fill="#432f25"/>
<rect x="11" y="97" width="4" height="1" fill="#693a2c"/>
<rect x="15" y="97" width="5" height="1" fill="#432f25"/>
<rect x="20" y="97" width="2" height="1" fill="#1d1108"/>
<rect x="9" y="98" width="1" height="1" fill="#1d1108"/>
<rect x="10" y="98" width="7" height="1" fill="#693a2c"/>
<rect x="17" y="98" width="3" height="1" fill="#432f25"/>
<rect x="20" y="98" width="1" height="1" fill="#1d1108"/>
<rect x="9" y="99" width="1" height="1" fill="#1d1108"/>
<rect x="10" y="99" width="1" height="1" fill="#432f25"/>
<rect x="11" y="99" width="4" height="1" fill="#693a2c"/>
<rect x="15" y="99" width="4" height="1" fill="#432f25"/>
<rect x="19" y="99" width="2" height="1" fill="#1d1108"/>
<rect x="10" y="100" width="1" height="1" fill="#1d1108"/>
<rect x="11" y="100" width="6" height="1" fill="#432f25"/>
<rect x="17" y="100" width="2" height="1" fill="#1d1108"/>
<rect x="19" y="100" width="1" height="1" fill="#27261a"/>
<rect x="20" y="100" width="1" height="1" fill="#1d1108"/>
<rect x="10" y="101" width="2" height="1" fill="#1d1108"/>
<rect x="12" y="101" width="3" height="1" fill="#27261a"/>
<rect x="15" y="101" width="1" height="1" fill="#1d1108"/>
<rect x="16" y="101" width="3" height="1" fill="#4d4128"/>
<rect x="19" y="101" width="1" height="1" fill="#27261a"/>
<rect x="20" y="101" width="1" height="1" fill="#1d1108"/>
<rect x="10" y="102" width="1" height="1" fill="#1d1108"/>
<rect x="11" y="102" width="8" height="1" fill="#4d4128"/>
<rect x="19" y="102" width="1" height="1" fill="#27261a"/>
<rect x="20" y="102" width="1" height="1" fill="#1d1108"/>
<rect x="11" y="103" width="1" height="1" fill="#1d1108"/>
<rect x="12" y="103" width="1" height="1" fill="#4d4128"/>
<rect x="13" y="103" width="1" height="1" fill="#1d1108"/>
<rect x="14" y="103" width="4" height="1" fill="#4d4128"/>
<rect x="18" y="103" width="1" height="1" fill="#27261a"/>
<rect x="19" y="103" width="1" height="1" fill="#1d1108"/>
<rect x="11" y="104" width="1" height="1" fill="#1d1108"/>
<rect x="12" y="104" width="1" height="1" fill="#27261a"/>
<rect x="13" y="104" width="1" height="1" fill="#1d1108"/>
<rect x="14" y="104" width="3" height="1" fill="#4d4128"/>
<rect x="17" y="104" width="2" height="1" fill="#27261a"/>
<rect x="19" y="104" width="1" height="1" fill="#1d1108"/>
<rect x="12" y="105" width="2" height="1" fill="#1d1108"/>
<rect x="14" y="105" width="3" height="1" fill="#4d4128"/>
<rect x="17" y="105" width="1" height="1" fill="#27261a"/>
<rect x="18" y="105" width="1" height="1" fill="#1d1108"/>
<rect x="12" y="106" width="2" height="1" fill="#1d1108"/>
<rect x="14" y="106" width="2" height="1" fill="#4d4128"/>
<rect x="16" y="106" width="2" height="1" fill="#27261a"/>
<rect x="18" y="106" width="1" height="1" fill="#1d1108"/>
<rect x="12" y="107" width="1" height="1" fill="#1d1108"/>
<rect x="13" y="107" width="3" height="1" fill="#4d4128"/>
<rect x="16" y="107" width="1" height="1" fill="#27261a"/>
<rect x="17" y="107" width="1" height="1" fill="#1d1108"/>
<rect x="18" y="107" width="1" height="1" fill="#27261a"/>
<rect x="19" y="107" width="1" height="1" fill="#1d1108"/>
<rect x="12" y="108" width="2" height="1" fill="#1d1108"/>
<rect x="14" y="108" width="3" height="1" fill="#27261a"/>
<rect x="17" y="108" width="1" height="1" fill="#1d1108"/>
<rect x="18" y="108" width="1" height="1" fill="#27261a"/>
<rect x="19" y="108" width="1" height="1" fill="#1d1108"/>
<rect x="11" y="109" width="1" height="1" fill="#1d1108"/>
<rect x="12" y="109" width="2" height="1" fill="#6e6550"/>
<rect x="14" y="109" width="1" height="1" fill="#1d1108"/>
<rect x="15" y="109" width="1" height="1" fill="#4d4128"/>
<rect x="16" y="109" width="1" height="1" fill="#27261a"/>
<rect x="17" y="109" width="3" height="1" fill="#1d1108"/>
<rect x="11" y="110" width="1" height="1" fill="#1d1108"/>
<rect x="12" y="110" width="2" height="1" fill="#4a4838"/>
<rect x="14" y="110" width="2" height="1" fill="#6e6550"/>
<rect x="16" y="110" width="2" height="1" fill="#1d1108"/>
<rect x="18" y="110" width="1" height="1" fill="#4a4838"/>
<rect x="19" y="110" width="1" height="1" fill="#1d1108"/>
<rect x="12" y="111" width="1" height="1" fill="#1d1108"/>
<rect x="13" y="111" width="3" height="1" fill="#4a4838"/>
<rect x="16" y="111" width="1" height="1" fill="#1d1108"/>
<rect x="17" y="111" width="1" height="1" fill="#4a4838"/>
<rect x="18" y="111" width="1" height="1" fill="#1d1108"/>
<rect x="41" y="74" width="9" height="1" fill="#1d1108"/>
<rect x="38" y="75" width="3" height="1" fill="#1d1108"/>
<rect x="41" y="75" width="4" height="1" fill="#d2c6a6"/>
<rect x="45" y="75" width="2" height="1" fill="#9c9a88"/>
<rect x="47" y="75" width="1" height="1" fill="#1d1108"/>
<rect x="48" y="75" width="2" height="1" fill="#9a948c"/>
<rect x="50" y="75" width="1" height="1" fill="#1d1108"/>
<rect x="37" y="76" width="1" height="1" fill="#1d1108"/>
<rect x="38" y="76" width="1" height="1" fill="#9a948c"/>
<rect x="39" y="76" width="1" height="1" fill="#1d1108"/>
<rect x="40" y="76" width="6" height="1" fill="#d2c6a6"/>
<rect x="46" y="76" width="1" height="1" fill="#9c9a88"/>
<rect x="47" y="76" width="1" height="1" fill="#1d1108"/>
<rect x="48" y="76" width="2" height="1" fill="#9a948c"/>
<rect x="50" y="76" width="1" height="1" fill="#7a7876"/>
<rect x="51" y="76" width="1" height="1" fill="#1d1108"/>
<rect x="37" y="77" width="2" height="1" fill="#1d1108"/>
<rect x="39" y="77" width="7" height="1" fill="#d2c6a6"/>
<rect x="46" y="77" width="2" height="1" fill="#9c9a88"/>
<rect x="48" y="77" width="3" height="1" fill="#7a7876"/>
<rect x="51" y="77" width="1" height="1" fill="#1d1108"/>
<rect x="36" y="78" width="1" height="1" fill="#1d1108"/>
<rect x="37" y="78" width="1" height="1" fill="#9a948c"/>
<rect x="38" y="78" width="1" height="1" fill="#1d1108"/>
<rect x="39" y="78" width="1" height="1" fill="#67625b"/>
<rect x="40" y="78" width="2" height="1" fill="#45403a"/>
<rect x="42" y="78" width="2" height="1" fill="#d2c6a6"/>
<rect x="44" y="78" width="3" height="1" fill="#67625b"/>
<rect x="47" y="78" width="1" height="1" fill="#45403a"/>
<rect x="48" y="78" width="1" height="1" fill="#9c9a88"/>
<rect x="49" y="78" width="3" height="1" fill="#7a7876"/>
<rect x="52" y="78" width="1" height="1" fill="#1d1108"/>
<rect x="36" y="79" width="1" height="1" fill="#1d1108"/>
<rect x="37" y="79" width="1" height="1" fill="#7a7876"/>
<rect x="38" y="79" width="1" height="1" fill="#1d1108"/>
<rect x="39" y="79" width="3" height="1" fill="#9c9a88"/>
<rect x="42" y="79" width="1" height="1" fill="#d2c6a6"/>
<rect x="43" y="79" width="6" height="1" fill="#9c9a88"/>
<rect x="49" y="79" width="2" height="1" fill="#1d1108"/>
<rect x="51" y="79" width="1" height="1" fill="#7a7876"/>
<rect x="52" y="79" width="1" height="1" fill="#1d1108"/>
<rect x="37" y="80" width="1" height="1" fill="#1d1108"/>
<rect x="38" y="80" width="1" height="1" fill="#7a7876"/>
<rect x="39" y="80" width="1" height="1" fill="#1d1108"/>
<rect x="40" y="80" width="1" height="1" fill="#9c9a88"/>
<rect x="41" y="80" width="1" height="1" fill="#1d1108"/>
<rect x="42" y="80" width="2" height="1" fill="#d2c6a6"/>
<rect x="44" y="80" width="4" height="1" fill="#9c9a88"/>
<rect x="48" y="80" width="1" height="1" fill="#1d1108"/>
<rect x="49" y="80" width="1" height="1" fill="#d2c6a6"/>
<rect x="50" y="80" width="1" height="1" fill="#9c9a88"/>
<rect x="51" y="80" width="2" height="1" fill="#1d1108"/>
<rect x="38" y="81" width="1" height="1" fill="#1d1108"/>
<rect x="39" y="81" width="1" height="1" fill="#d2c6a6"/>
<rect x="40" y="81" width="1" height="1" fill="#1d1108"/>
<rect x="41" y="81" width="6" height="1" fill="#d2c6a6"/>
<rect x="47" y="81" width="1" height="1" fill="#9c9a88"/>
<rect x="48" y="81" width="1" height="1" fill="#d2c6a6"/>
<rect x="49" y="81" width="2" height="1" fill="#9c9a88"/>
<rect x="51" y="81" width="1" height="1" fill="#1d1108"/>
<rect x="38" y="82" width="1" height="1" fill="#1d1108"/>
<rect x="39" y="82" width="1" height="1" fill="#d2c6a6"/>
<rect x="40" y="82" width="1" height="1" fill="#1d1108"/>
<rect x="41" y="82" width="3" height="1" fill="#d2c6a6"/>
<rect x="44" y="82" width="1" height="1" fill="#9c9a88"/>
<rect x="45" y="82" width="2" height="1" fill="#d2c6a6"/>
<rect x="47" y="82" width="1" height="1" fill="#9c9a88"/>
<rect x="48" y="82" width="1" height="1" fill="#1d1108"/>
<rect x="49" y="82" width="1" height="1" fill="#d2c6a6"/>
<rect x="50" y="82" width="1" height="1" fill="#9c9a88"/>
<rect x="51" y="82" width="1" height="1" fill="#1d1108"/>
<rect x="38" y="83" width="1" height="1" fill="#1d1108"/>
<rect x="39" y="83" width="1" height="1" fill="#d2c6a6"/>
<rect x="40" y="83" width="1" height="1" fill="#9c9a88"/>
<rect x="41" y="83" width="2" height="1" fill="#1d1108"/>
<rect x="43" y="83" width="1" height="1" fill="#9c9a88"/>
<rect x="44" y="83" width="1" height="1" fill="#d2c6a6"/>
<rect x="45" y="83" width="1" height="1" fill="#9c9a88"/>
<rect x="46" y="83" width="1" height="1" fill="#d2c6a6"/>
<rect x="47" y="83" width="2" height="1" fill="#9c9a88"/>
<rect x="49" y="83" width="2" height="1" fill="#1d1108"/>
<rect x="39" y="84" width="1" height="1" fill="#1d1108"/>
<rect x="40" y="84" width="1" height="1" fill="#9c9a88"/>
<rect x="41" y="84" width="5" height="1" fill="#d2c6a6"/>
<rect x="46" y="84" width="3" height="1" fill="#9c9a88"/>
<rect x="49" y="84" width="1" height="1" fill="#1d1108"/>
<rect x="39" y="85" width="1" height="1" fill="#1d1108"/>
<rect x="40" y="85" width="2" height="1" fill="#d2c6a6"/>
<rect x="42" y="85" width="3" height="1" fill="#45403a"/>
<rect x="45" y="85" width="1" height="1" fill="#d2c6a6"/>
<rect x="46" y="85" width="2" height="1" fill="#9c9a88"/>
<rect x="48" y="85" width="1" height="1" fill="#1d1108"/>
<rect x="40" y="86" width="1" height="1" fill="#1d1108"/>
<rect x="41" y="86" width="4" height="1" fill="#d2c6a6"/>
<rect x="45" y="86" width="2" height="1" fill="#9c9a88"/>
<rect x="47" y="86" width="1" height="1" fill="#1d1108"/>
<rect x="41" y="87" width="3" height="1" fill="#1d1108"/>
<rect x="44" y="87" width="3" height="1" fill="#9c9a88"/>
<rect x="47" y="87" width="2" height="1" fill="#1d1108"/>
<rect x="42" y="88" width="1" height="1" fill="#1d1108"/>
<rect x="43" y="88" width="1" height="1" fill="#d2c6a6"/>
<rect x="44" y="88" width="2" height="1" fill="#9c9a88"/>
<rect x="46" y="88" width="1" height="1" fill="#1d1108"/>
<rect x="47" y="88" width="2" height="1" fill="#b2b1ad"/>
<rect x="49" y="88" width="1" height="1" fill="#1d1108"/>
<rect x="41" y="89" width="1" height="1" fill="#1d1108"/>
<rect x="42" y="89" width="1" height="1" fill="#d2cfca"/>
<rect x="43" y="89" width="1" height="1" fill="#1d1108"/>
<rect x="44" y="89" width="1" height="1" fill="#d2c6a6"/>
<rect x="45" y="89" width="1" height="1" fill="#1d1108"/>
<rect x="46" y="89" width="1" height="1" fill="#b2b1ad"/>
<rect x="47" y="89" width="3" height="1" fill="#432f25"/>
<rect x="50" y="89" width="1" height="1" fill="#1d1108"/>
<rect x="40" y="90" width="1" height="1" fill="#1d1108"/>
<rect x="41" y="90" width="1" height="1" fill="#693a2c"/>
<rect x="42" y="90" width="1" height="1" fill="#1d1108"/>
<rect x="43" y="90" width="1" height="1" fill="#d2cfca"/>
<rect x="44" y="90" width="1" height="1" fill="#1d1108"/>
<rect x="45" y="90" width="1" height="1" fill="#d2cfca"/>
<rect x="46" y="90" width="1" height="1" fill="#1d1108"/>
<rect x="47" y="90" width="2" height="1" fill="#432f25"/>
<rect x="49" y="90" width="2" height="1" fill="#d2cfca"/>
<rect x="51" y="90" width="1" height="1" fill="#1d1108"/>
<rect x="40" y="91" width="1" height="1" fill="#1d1108"/>
<rect x="41" y="91" width="2" height="1" fill="#693a2c"/>
<rect x="43" y="91" width="1" height="1" fill="#1d1108"/>
<rect x="44" y="91" width="1" height="1" fill="#693a2c"/>
<rect x="45" y="91" width="1" height="1" fill="#1d1108"/>
<rect x="46" y="91" width="1" height="1" fill="#693a2c"/>
<rect x="47" y="91" width="2" height="1" fill="#432f25"/>
<rect x="49" y="91" width="2" height="1" fill="#d2cfca"/>
<rect x="51" y="91" width="1" height="1" fill="#b2b1ad"/>
<rect x="52" y="91" width="1" height="1" fill="#1d1108"/>
<rect x="40" y="92" width="1" height="1" fill="#1d1108"/>
<rect x="41" y="92" width="5" height="1" fill="#693a2c"/>
<rect x="46" y="92" width="3" height="1" fill="#77746b"/>
<rect x="49" y="92" width="1" height="1" fill="#1d1108"/>
<rect x="50" y="92" width="3" height="1" fill="#b2b1ad"/>
<rect x="53" y="92" width="1" height="1" fill="#1d1108"/>
<rect x="40" y="93" width="1" height="1" fill="#1d1108"/>
<rect x="41" y="93" width="5" height="1" fill="#9c9683"/>
<rect x="46" y="93" width="4" height="1" fill="#77746b"/>
<rect x="50" y="93" width="1" height="1" fill="#1d1108"/>
<rect x="51" y="93" width="3" height="1" fill="#b2b1ad"/>
<rect x="54" y="93" width="1" height="1" fill="#1d1108"/>
<rect x="40" y="94" width="1" height="1" fill="#1d1108"/>
<rect x="41" y="94" width="1" height="1" fill="#77746b"/>
<rect x="42" y="94" width="3" height="1" fill="#9c9683"/>
<rect x="45" y="94" width="2" height="1" fill="#77746b"/>
<rect x="47" y="94" width="4" height="1" fill="#432f25"/>
<rect x="51" y="94" width="1" height="1" fill="#1d1108"/>
<rect x="52" y="94" width="2" height="1" fill="#b2b1ad"/>
<rect x="54" y="94" width="1" height="1" fill="#1d1108"/>
<rect x="41" y="95" width="1" height="1" fill="#1d1108"/>
<rect x="42" y="95" width="6" height="1" fill="#693a2c"/>
<rect x="48" y="95" width="4" height="1" fill="#432f25"/>
<rect x="52" y="95" width="2" height="1" fill="#b2b1ad"/>
<rect x="54" y="95" width="1" height="1" fill="#1d1108"/>
<rect x="41" y="96" width="1" height="1" fill="#1d1108"/>
<rect x="42" y="96" width="1" height="1" fill="#432f25"/>
<rect x="43" y="96" width="4" height="1" fill="#693a2c"/>
<rect x="47" y="96" width="5" height="1" fill="#432f25"/>
<rect x="52" y="96" width="2" height="1" fill="#1d1108"/>
<rect x="41" y="97" width="1" height="1" fill="#1d1108"/>
<rect x="42" y="97" width="7" height="1" fill="#693a2c"/>
<rect x="49" y="97" width="3" height="1" fill="#432f25"/>
<rect x="52" y="97" width="1" height="1" fill="#1d1108"/>
<rect x="41" y="98" width="1" height="1" fill="#1d1108"/>
<rect x="42" y="98" width="1" height="1" fill="#432f25"/>
<rect x="43" y="98" width="4" height="1" fill="#693a2c"/>
<rect x="47" y="98" width="4" height="1" fill="#432f25"/>
<rect x="51" y="98" width="2" height="1" fill="#1d1108"/>
<rect x="42" y="99" width="1" height="1" fill="#1d1108"/>
<rect x="43" y="99" width="6" height="1" fill="#432f25"/>
<rect x="49" y="99" width="2" height="1" fill="#1d1108"/>
<rect x="51" y="99" width="1" height="1" fill="#27261a"/>
<rect x="52" y="99" width="1" height="1" fill="#1d1108"/>
<rect x="42" y="100" width="2" height="1" fill="#1d1108"/>
<rect x="44" y="100" width="3" height="1" fill="#27261a"/>
<rect x="47" y="100" width="1" height="1" fill="#1d1108"/>
<rect x="48" y="100" width="3" height="1" fill="#4d4128"/>
<rect x="51" y="100" width="1" height="1" fill="#27261a"/>
<rect x="52" y="100" width="1" height="1" fill="#1d1108"/>
<rect x="42" y="101" width="1" height="1" fill="#1d1108"/>
<rect x="43" y="101" width="8" height="1" fill="#4d4128"/>
<rect x="51" y="101" width="1" height="1" fill="#27261a"/>
<rect x="52" y="101" width="1" height="1" fill="#1d1108"/>
<rect x="42" y="102" width="1" height="1" fill="#1d1108"/>
<rect x="43" y="102" width="2" height="1" fill="#4d4128"/>
<rect x="45" y="102" width="1" height="1" fill="#1d1108"/>
<rect x="46" y="102" width="4" height="1" fill="#4d4128"/>
<rect x="50" y="102" width="2" height="1" fill="#27261a"/>
<rect x="52" y="102" width="1" height="1" fill="#1d1108"/>
<rect x="42" y="103" width="1" height="1" fill="#1d1108"/>
<rect x="43" y="103" width="2" height="1" fill="#4d4128"/>
<rect x="45" y="103" width="1" height="1" fill="#1d1108"/>
<rect x="46" y="103" width="4" height="1" fill="#4d4128"/>
<rect x="50" y="103" width="2" height="1" fill="#27261a"/>
<rect x="52" y="103" width="1" height="1" fill="#1d1108"/>
<rect x="43" y="104" width="1" height="1" fill="#1d1108"/>
<rect x="44" y="104" width="1" height="1" fill="#4d4128"/>
<rect x="45" y="104" width="1" height="1" fill="#27261a"/>
<rect x="46" y="104" width="1" height="1" fill="#1d1108"/>
<rect x="47" y="104" width="3" height="1" fill="#4d4128"/>
<rect x="50" y="104" width="1" height="1" fill="#27261a"/>
<rect x="51" y="104" width="1" height="1" fill="#1d1108"/>
<rect x="43" y="105" width="1" height="1" fill="#1d1108"/>
<rect x="44" y="105" width="1" height="1" fill="#4d4128"/>
<rect x="45" y="105" width="1" height="1" fill="#27261a"/>
<rect x="46" y="105" width="1" height="1" fill="#1d1108"/>
<rect x="47" y="105" width="2" height="1" fill="#4d4128"/>
<rect x="49" y="105" width="2" height="1" fill="#27261a"/>
<rect x="51" y="105" width="1" height="1" fill="#1d1108"/>
<rect x="43" y="106" width="1" height="1" fill="#1d1108"/>
<rect x="44" y="106" width="2" height="1" fill="#27261a"/>
<rect x="46" y="106" width="1" height="1" fill="#1d1108"/>
<rect x="47" y="106" width="4" height="1" fill="#27261a"/>
<rect x="51" y="106" width="1" height="1" fill="#1d1108"/>
<rect x="44" y="107" width="1" height="1" fill="#1d1108"/>
<rect x="45" y="107" width="2" height="1" fill="#27261a"/>
<rect x="47" y="107" width="1" height="1" fill="#1d1108"/>
<rect x="48" y="107" width="3" height="1" fill="#27261a"/>
<rect x="51" y="107" width="1" height="1" fill="#1d1108"/>
<rect x="44" y="108" width="1" height="1" fill="#1d1108"/>
<rect x="45" y="108" width="2" height="1" fill="#27261a"/>
<rect x="47" y="108" width="1" height="1" fill="#1d1108"/>
<rect x="48" y="108" width="3" height="1" fill="#27261a"/>
<rect x="51" y="108" width="1" height="1" fill="#1d1108"/>
<rect x="44" y="109" width="1" height="1" fill="#1d1108"/>
<rect x="45" y="109" width="1" height="1" fill="#4d4128"/>
<rect x="46" y="109" width="1" height="1" fill="#27261a"/>
<rect x="47" y="109" width="1" height="1" fill="#1d1108"/>
<rect x="48" y="109" width="2" height="1" fill="#4d4128"/>
<rect x="50" y="109" width="1" height="1" fill="#27261a"/>
<rect x="51" y="109" width="1" height="1" fill="#1d1108"/>
<rect x="43" y="110" width="1" height="1" fill="#1d1108"/>
<rect x="44" y="110" width="2" height="1" fill="#4a4838"/>
<rect x="46" y="110" width="1" height="1" fill="#1d1108"/>
<rect x="47" y="110" width="2" height="1" fill="#4a4838"/>
<rect x="49" y="110" width="2" height="1" fill="#1d1108"/>
<rect x="42" y="111" width="1" height="1" fill="#1d1108"/>
<rect x="43" y="111" width="2" height="1" fill="#6e6550"/>
<rect x="45" y="111" width="1" height="1" fill="#1d1108"/>
<rect x="46" y="111" width="2" height="1" fill="#6e6550"/>
<rect x="48" y="111" width="2" height="1" fill="#4a4838"/>
<rect x="50" y="111" width="1" height="1" fill="#1d1108"/>
<rect x="73" y="75" width="9" height="1" fill="#1d1108"/>
<rect x="70" y="76" width="3" height="1" fill="#1d1108"/>
<rect x="73" y="76" width="4" height="1" fill="#d2c6a6"/>
<rect x="77" y="76" width="2" height="1" fill="#9c9a88"/>
<rect x="79" y="76" width="1" height="1" fill="#1d1108"/>
<rect x="80" y="76" width="2" height="1" fill="#9a948c"/>
<rect x="82" y="76" width="1" height="1" fill="#1d1108"/>
<rect x="69" y="77" width="1" height="1" fill="#1d1108"/>
<rect x="70" y="77" width="1" height="1" fill="#9a948c"/>
<rect x="71" y="77" width="1" height="1" fill="#1d1108"/>
<rect x="72" y="77" width="6" height="1" fill="#d2c6a6"/>
<rect x="78" y="77" width="1" height="1" fill="#9c9a88"/>
<rect x="79" y="77" width="1" height="1" fill="#1d1108"/>
<rect x="80" y="77" width="2" height="1" fill="#9a948c"/>
<rect x="82" y="77" width="1" height="1" fill="#7a7876"/>
<rect x="83" y="77" width="1" height="1" fill="#1d1108"/>
<rect x="69" y="78" width="2" height="1" fill="#1d1108"/>
<rect x="71" y="78" width="7" height="1" fill="#d2c6a6"/>
<rect x="78" y="78" width="2" height="1" fill="#9c9a88"/>
<rect x="80" y="78" width="3" height="1" fill="#7a7876"/>
<rect x="83" y="78" width="1" height="1" fill="#1d1108"/>
<rect x="68" y="79" width="1" height="1" fill="#1d1108"/>
<rect x="69" y="79" width="1" height="1" fill="#9a948c"/>
<rect x="70" y="79" width="1" height="1" fill="#1d1108"/>
<rect x="71" y="79" width="1" height="1" fill="#67625b"/>
<rect x="72" y="79" width="2" height="1" fill="#45403a"/>
<rect x="74" y="79" width="2" height="1" fill="#d2c6a6"/>
<rect x="76" y="79" width="3" height="1" fill="#67625b"/>
<rect x="79" y="79" width="1" height="1" fill="#45403a"/>
<rect x="80" y="79" width="1" height="1" fill="#9c9a88"/>
<rect x="81" y="79" width="3" height="1" fill="#7a7876"/>
<rect x="84" y="79" width="1" height="1" fill="#1d1108"/>
<rect x="68" y="80" width="1" height="1" fill="#1d1108"/>
<rect x="69" y="80" width="1" height="1" fill="#7a7876"/>
<rect x="70" y="80" width="1" height="1" fill="#1d1108"/>
<rect x="71" y="80" width="3" height="1" fill="#9c9a88"/>
<rect x="74" y="80" width="1" height="1" fill="#d2c6a6"/>
<rect x="75" y="80" width="6" height="1" fill="#9c9a88"/>
<rect x="81" y="80" width="2" height="1" fill="#1d1108"/>
<rect x="83" y="80" width="1" height="1" fill="#7a7876"/>
<rect x="84" y="80" width="1" height="1" fill="#1d1108"/>
<rect x="69" y="81" width="1" height="1" fill="#1d1108"/>
<rect x="70" y="81" width="1" height="1" fill="#7a7876"/>
<rect x="71" y="81" width="1" height="1" fill="#1d1108"/>
<rect x="72" y="81" width="1" height="1" fill="#9c9a88"/>
<rect x="73" y="81" width="1" height="1" fill="#1d1108"/>
<rect x="74" y="81" width="2" height="1" fill="#d2c6a6"/>
<rect x="76" y="81" width="4" height="1" fill="#9c9a88"/>
<rect x="80" y="81" width="1" height="1" fill="#1d1108"/>
<rect x="81" y="81" width="1" height="1" fill="#d2c6a6"/>
<rect x="82" y="81" width="1" height="1" fill="#9c9a88"/>
<rect x="83" y="81" width="2" height="1" fill="#1d1108"/>
<rect x="70" y="82" width="1" height="1" fill="#1d1108"/>
<rect x="71" y="82" width="1" height="1" fill="#d2c6a6"/>
<rect x="72" y="82" width="1" height="1" fill="#1d1108"/>
<rect x="73" y="82" width="6" height="1" fill="#d2c6a6"/>
<rect x="79" y="82" width="1" height="1" fill="#9c9a88"/>
<rect x="80" y="82" width="1" height="1" fill="#d2c6a6"/>
<rect x="81" y="82" width="2" height="1" fill="#9c9a88"/>
<rect x="83" y="82" width="1" height="1" fill="#1d1108"/>
<rect x="70" y="83" width="1" height="1" fill="#1d1108"/>
<rect x="71" y="83" width="1" height="1" fill="#d2c6a6"/>
<rect x="72" y="83" width="1" height="1" fill="#1d1108"/>
<rect x="73" y="83" width="3" height="1" fill="#d2c6a6"/>
<rect x="76" y="83" width="1" height="1" fill="#9c9a88"/>
<rect x="77" y="83" width="2" height="1" fill="#d2c6a6"/>
<rect x="79" y="83" width="1" height="1" fill="#9c9a88"/>
<rect x="80" y="83" width="1" height="1" fill="#1d1108"/>
<rect x="81" y="83" width="1" height="1" fill="#d2c6a6"/>
<rect x="82" y="83" width="1" height="1" fill="#9c9a88"/>
<rect x="83" y="83" width="1" height="1" fill="#1d1108"/>
<rect x="70" y="84" width="1" height="1" fill="#1d1108"/>
<rect x="71" y="84" width="1" height="1" fill="#d2c6a6"/>
<rect x="72" y="84" width="1" height="1" fill="#9c9a88"/>
<rect x="73" y="84" width="2" height="1" fill="#1d1108"/>
<rect x="75" y="84" width="1" height="1" fill="#9c9a88"/>
<rect x="76" y="84" width="1" height="1" fill="#d2c6a6"/>
<rect x="77" y="84" width="1" height="1" fill="#9c9a88"/>
<rect x="78" y="84" width="1" height="1" fill="#d2c6a6"/>
<rect x="79" y="84" width="2" height="1" fill="#9c9a88"/>
<rect x="81" y="84" width="2" height="1" fill="#1d1108"/>
<rect x="71" y="85" width="1" height="1" fill="#1d1108"/>
<rect x="72" y="85" width="1" height="1" fill="#9c9a88"/>
<rect x="73" y="85" width="5" height="1" fill="#d2c6a6"/>
<rect x="78" y="85" width="3" height="1" fill="#9c9a88"/>
<rect x="81" y="85" width="1" height="1" fill="#1d1108"/>
<rect x="71" y="86" width="1" height="1" fill="#1d1108"/>
<rect x="72" y="86" width="2" height="1" fill="#d2c6a6"/>
<rect x="74" y="86" width="3" height="1" fill="#45403a"/>
<rect x="77" y="86" width="1" height="1" fill="#d2c6a6"/>
<rect x="78" y="86" width="2" height="1" fill="#9c9a88"/>
<rect x="80" y="86" width="1" height="1" fill="#1d1108"/>
<rect x="72" y="87" width="1" height="1" fill="#1d1108"/>
<rect x="73" y="87" width="4" height="1" fill="#d2c6a6"/>
<rect x="77" y="87" width="2" height="1" fill="#9c9a88"/>
<rect x="79" y="87" width="1" height="1" fill="#1d1108"/>
<rect x="73" y="88" width="3" height="1" fill="#1d1108"/>
<rect x="76" y="88" width="3" height="1" fill="#9c9a88"/>
<rect x="79" y="88" width="2" height="1" fill="#1d1108"/>
<rect x="74" y="89" width="1" height="1" fill="#1d1108"/>
<rect x="75" y="89" width="1" height="1" fill="#d2c6a6"/>
<rect x="76" y="89" width="2" height="1" fill="#9c9a88"/>
<rect x="78" y="89" width="1" height="1" fill="#1d1108"/>
<rect x="79" y="89" width="2" height="1" fill="#b2b1ad"/>
<rect x="81" y="89" width="1" height="1" fill="#1d1108"/>
<rect x="73" y="90" width="1" height="1" fill="#1d1108"/>
<rect x="74" y="90" width="1" height="1" fill="#d2cfca"/>
<rect x="75" y="90" width="1" height="1" fill="#1d1108"/>
<rect x="76" y="90" width="1" height="1" fill="#d2c6a6"/>
<rect x="77" y="90" width="1" height="1" fill="#1d1108"/>
<rect x="78" y="90" width="1" height="1" fill="#b2b1ad"/>
<rect x="79" y="90" width="3" height="1" fill="#432f25"/>
<rect x="82" y="90" width="1" height="1" fill="#1d1108"/>
<rect x="72" y="91" width="1" height="1" fill="#1d1108"/>
<rect x="73" y="91" width="1" height="1" fill="#693a2c"/>
<rect x="74" y="91" width="1" height="1" fill="#1d1108"/>
<rect x="75" y="91" width="1" height="1" fill="#d2cfca"/>
<rect x="76" y="91" width="1" height="1" fill="#1d1108"/>
<rect x="77" y="91" width="1" height="1" fill="#d2cfca"/>
<rect x="78" y="91" width="1" height="1" fill="#1d1108"/>
<rect x="79" y="91" width="2" height="1" fill="#432f25"/>
<rect x="81" y="91" width="2" height="1" fill="#d2cfca"/>
<rect x="83" y="91" width="1" height="1" fill="#1d1108"/>
<rect x="72" y="92" width="1" height="1" fill="#1d1108"/>
<rect x="73" y="92" width="2" height="1" fill="#693a2c"/>
<rect x="75" y="92" width="1" height="1" fill="#1d1108"/>
<rect x="76" y="92" width="1" height="1" fill="#693a2c"/>
<rect x="77" y="92" width="1" height="1" fill="#1d1108"/>
<rect x="78" y="92" width="1" height="1" fill="#693a2c"/>
<rect x="79" y="92" width="2" height="1" fill="#432f25"/>
<rect x="81" y="92" width="2" height="1" fill="#d2cfca"/>
<rect x="83" y="92" width="1" height="1" fill="#b2b1ad"/>
<rect x="84" y="92" width="1" height="1" fill="#1d1108"/>
<rect x="72" y="93" width="1" height="1" fill="#1d1108"/>
<rect x="73" y="93" width="5" height="1" fill="#693a2c"/>
<rect x="78" y="93" width="3" height="1" fill="#77746b"/>
<rect x="81" y="93" width="1" height="1" fill="#1d1108"/>
<rect x="82" y="93" width="3" height="1" fill="#b2b1ad"/>
<rect x="85" y="93" width="1" height="1" fill="#1d1108"/>
<rect x="72" y="94" width="1" height="1" fill="#1d1108"/>
<rect x="73" y="94" width="5" height="1" fill="#9c9683"/>
<rect x="78" y="94" width="4" height="1" fill="#77746b"/>
<rect x="82" y="94" width="1" height="1" fill="#1d1108"/>
<rect x="83" y="94" width="3" height="1" fill="#b2b1ad"/>
<rect x="86" y="94" width="1" height="1" fill="#1d1108"/>
<rect x="72" y="95" width="1" height="1" fill="#1d1108"/>
<rect x="73" y="95" width="1" height="1" fill="#77746b"/>
<rect x="74" y="95" width="3" height="1" fill="#9c9683"/>
<rect x="77" y="95" width="2" height="1" fill="#77746b"/>
<rect x="79" y="95" width="4" height="1" fill="#432f25"/>
<rect x="83" y="95" width="1" height="1" fill="#1d1108"/>
<rect x="84" y="95" width="2" height="1" fill="#b2b1ad"/>
<rect x="86" y="95" width="1" height="1" fill="#1d1108"/>
<rect x="73" y="96" width="1" height="1" fill="#1d1108"/>
<rect x="74" y="96" width="6" height="1" fill="#693a2c"/>
<rect x="80" y="96" width="4" height="1" fill="#432f25"/>
<rect x="84" y="96" width="2" height="1" fill="#b2b1ad"/>
<rect x="86" y="96" width="1" height="1" fill="#1d1108"/>
<rect x="73" y="97" width="1" height="1" fill="#1d1108"/>
<rect x="74" y="97" width="1" height="1" fill="#432f25"/>
<rect x="75" y="97" width="4" height="1" fill="#693a2c"/>
<rect x="79" y="97" width="5" height="1" fill="#432f25"/>
<rect x="84" y="97" width="2" height="1" fill="#1d1108"/>
<rect x="73" y="98" width="1" height="1" fill="#1d1108"/>
<rect x="74" y="98" width="7" height="1" fill="#693a2c"/>
<rect x="81" y="98" width="3" height="1" fill="#432f25"/>
<rect x="84" y="98" width="1" height="1" fill="#1d1108"/>
<rect x="73" y="99" width="1" height="1" fill="#1d1108"/>
<rect x="74" y="99" width="1" height="1" fill="#432f25"/>
<rect x="75" y="99" width="4" height="1" fill="#693a2c"/>
<rect x="79" y="99" width="4" height="1" fill="#432f25"/>
<rect x="83" y="99" width="2" height="1" fill="#1d1108"/>
<rect x="74" y="100" width="1" height="1" fill="#1d1108"/>
<rect x="75" y="100" width="6" height="1" fill="#432f25"/>
<rect x="81" y="100" width="2" height="1" fill="#1d1108"/>
<rect x="83" y="100" width="1" height="1" fill="#27261a"/>
<rect x="84" y="100" width="1" height="1" fill="#1d1108"/>
<rect x="74" y="101" width="2" height="1" fill="#1d1108"/>
<rect x="76" y="101" width="3" height="1" fill="#27261a"/>
<rect x="79" y="101" width="1" height="1" fill="#1d1108"/>
<rect x="80" y="101" width="3" height="1" fill="#4d4128"/>
<rect x="83" y="101" width="1" height="1" fill="#27261a"/>
<rect x="84" y="101" width="1" height="1" fill="#1d1108"/>
<rect x="74" y="102" width="1" height="1" fill="#1d1108"/>
<rect x="75" y="102" width="8" height="1" fill="#4d4128"/>
<rect x="83" y="102" width="2" height="1" fill="#27261a"/>
<rect x="85" y="102" width="1" height="1" fill="#1d1108"/>
<rect x="73" y="103" width="1" height="1" fill="#1d1108"/>
<rect x="74" y="103" width="3" height="1" fill="#4d4128"/>
<rect x="77" y="103" width="1" height="1" fill="#27261a"/>
<rect x="78" y="103" width="2" height="1" fill="#1d1108"/>
<rect x="80" y="103" width="1" height="1" fill="#27261a"/>
<rect x="81" y="103" width="2" height="1" fill="#4d4128"/>
<rect x="83" y="103" width="2" height="1" fill="#27261a"/>
<rect x="85" y="103" width="1" height="1" fill="#1d1108"/>
<rect x="73" y="104" width="1" height="1" fill="#1d1108"/>
<rect x="74" y="104" width="2" height="1" fill="#4d4128"/>
<rect x="76" y="104" width="2" height="1" fill="#27261a"/>
<rect x="78" y="104" width="1" height="1" fill="#1d1108"/>
<rect x="80" y="104" width="1" height="1" fill="#1d1108"/>
<rect x="81" y="104" width="2" height="1" fill="#4d4128"/>
<rect x="83" y="104" width="3" height="1" fill="#27261a"/>
<rect x="86" y="104" width="1" height="1" fill="#1d1108"/>
<rect x="72" y="105" width="1" height="1" fill="#1d1108"/>
<rect x="73" y="105" width="3" height="1" fill="#4d4128"/>
<rect x="76" y="105" width="1" height="1" fill="#27261a"/>
<rect x="77" y="105" width="1" height="1" fill="#1d1108"/>
<rect x="81" y="105" width="1" height="1" fill="#1d1108"/>
<rect x="82" y="105" width="4" height="1" fill="#27261a"/>
<rect x="86" y="105" width="1" height="1" fill="#1d1108"/>
<rect x="72" y="106" width="1" height="1" fill="#1d1108"/>
<rect x="73" y="106" width="2" height="1" fill="#4d4128"/>
<rect x="75" y="106" width="2" height="1" fill="#27261a"/>
<rect x="77" y="106" width="1" height="1" fill="#1d1108"/>
<rect x="81" y="106" width="1" height="1" fill="#1d1108"/>
<rect x="82" y="106" width="5" height="1" fill="#27261a"/>
<rect x="87" y="106" width="1" height="1" fill="#1d1108"/>
<rect x="72" y="107" width="1" height="1" fill="#1d1108"/>
<rect x="73" y="107" width="2" height="1" fill="#4d4128"/>
<rect x="75" y="107" width="1" height="1" fill="#27261a"/>
<rect x="76" y="107" width="1" height="1" fill="#1d1108"/>
<rect x="82" y="107" width="1" height="1" fill="#1d1108"/>
<rect x="83" y="107" width="4" height="1" fill="#27261a"/>
<rect x="87" y="107" width="1" height="1" fill="#1d1108"/>
<rect x="71" y="108" width="2" height="1" fill="#1d1108"/>
<rect x="73" y="108" width="3" height="1" fill="#27261a"/>
<rect x="76" y="108" width="1" height="1" fill="#1d1108"/>
<rect x="83" y="108" width="1" height="1" fill="#1d1108"/>
<rect x="84" y="108" width="3" height="1" fill="#27261a"/>
<rect x="87" y="108" width="1" height="1" fill="#1d1108"/>
<rect x="70" y="109" width="1" height="1" fill="#1d1108"/>
<rect x="71" y="109" width="2" height="1" fill="#6e6550"/>
<rect x="73" y="109" width="1" height="1" fill="#1d1108"/>
<rect x="74" y="109" width="1" height="1" fill="#4d4128"/>
<rect x="75" y="109" width="1" height="1" fill="#27261a"/>
<rect x="76" y="109" width="1" height="1" fill="#1d1108"/>
<rect x="83" y="109" width="1" height="1" fill="#1d1108"/>
<rect x="84" y="109" width="2" height="1" fill="#4a4838"/>
<rect x="86" y="109" width="1" height="1" fill="#1d1108"/>
<rect x="70" y="110" width="1" height="1" fill="#1d1108"/>
<rect x="71" y="110" width="2" height="1" fill="#4a4838"/>
<rect x="73" y="110" width="2" height="1" fill="#6e6550"/>
<rect x="75" y="110" width="1" height="1" fill="#1d1108"/>
<rect x="82" y="110" width="1" height="1" fill="#1d1108"/>
<rect x="83" y="110" width="3" height="1" fill="#4a4838"/>
<rect x="86" y="110" width="1" height="1" fill="#1d1108"/>
<rect x="71" y="111" width="1" height="1" fill="#1d1108"/>
<rect x="72" y="111" width="3" height="1" fill="#4a4838"/>
<rect x="75" y="111" width="1" height="1" fill="#1d1108"/>
<rect x="81" y="111" width="1" height="1" fill="#1d1108"/>
<rect x="82" y="111" width="2" height="1" fill="#6e6550"/>
<rect x="84" y="111" width="1" height="1" fill="#4a4838"/>
<rect x="85" y="111" width="1" height="1" fill="#1d1108"/>
</g></g>
  </svg>
</div>
<!-- vscroll -->
<div class="abs" style="left:1347px;top:69px;width:13px;height:621px;background:#e7e7e7"></div>
<div class="abs" style="left:1346px;top:53px;width:15px;height:15px;background:#999;border:1px solid #6e6e6e;border-radius:3px"><svg class="abs" style="left:0;top:0" width="13" height="13"><path d="M3 8.5L6.5 5L10 8.5Z" fill="#fff"/></svg></div>
<div class="abs" style="left:1346px;top:691px;width:15px;height:15px;background:#999;border:1px solid #6e6e6e;border-radius:3px"><svg class="abs" style="left:0;top:0" width="13" height="13"><path d="M3 5L6.5 8.5L10 5Z" fill="#fff"/></svg></div>
<div class="abs" style="left:1346px;top:198px;width:15px;height:193px;background:#999;border:1px solid #6e6e6e;border-radius:3px"></div>
<!-- hscroll -->
<div class="abs" style="left:21px;top:708px;width:1308px;height:13px;background:#e6e6e6"></div>
<div class="abs" style="left:5px;top:707px;width:15px;height:15px;background:#999;border:1px solid #6e6e6e;border-radius:3px"><svg class="abs" style="left:0;top:0" width="13" height="13"><path d="M8 3L4.5 6.5L8 10Z" fill="#fff"/></svg></div>
<div class="abs" style="left:1330px;top:707px;width:15px;height:15px;background:#999;border:1px solid #6e6e6e;border-radius:3px"><svg class="abs" style="left:0;top:0" width="13" height="13"><path d="M5 3L8.5 6.5L5 10Z" fill="#fff"/></svg></div>
<div class="abs" style="left:211px;top:707px;width:930px;height:15px;background:#999;border:1px solid #6e6e6e;border-radius:3px"></div>
<div class="abs" style="left:1346px;top:707px;width:15px;height:15px;background:#e6e6e6"></div>

<!-- taskbar -->
<div id="taskbar" class="abs"></div>
<div class="abs" style="left:99px;top:728px;width:48px;height:40px;background:#ad6527"></div>
<div class="abs" style="left:99px;top:766px;width:48px;height:2px;background:#ff7a16"></div>
<div class="abs" style="left:148px;top:728px;width:48px;height:40px;background:#5b4e48"></div>
<div class="abs ul" style="left:148px;width:48px"></div>
<div class="abs ul" style="left:250px;width:40px"></div>
<div class="abs ul" style="left:348px;width:40px"></div>
<div class="abs ul" style="left:397px;width:40px"></div>
<div id="icons">
<svg class="abs" style="left:0;top:728px" width="1366" height="40" viewBox="0 728 1366 40">
 <defs>
  <linearGradient id="rb" x1="163" y1="0" x2="181" y2="0" gradientUnits="userSpaceOnUse">
   <stop offset="0" stop-color="#e020d0"/><stop offset="0.17" stop-color="#1818c8"/><stop offset="0.36" stop-color="#10e0f0"/><stop offset="0.56" stop-color="#18b030"/><stop offset="0.76" stop-color="#f0f010"/><stop offset="1" stop-color="#ff1000"/>
  </linearGradient>
  <linearGradient id="flring" x1="0" y1="0" x2="1" y2="1"><stop offset="0" stop-color="#f0f4f4"/><stop offset="0.5" stop-color="#7a8888"/><stop offset="1" stop-color="#c0cccc"/></linearGradient>
  <linearGradient id="flo" x1="0" y1="0" x2="0.3" y2="1"><stop offset="0" stop-color="#fff040"/><stop offset="0.55" stop-color="#ffb000"/><stop offset="1" stop-color="#e84000"/></linearGradient>
 </defs>
 <!-- windows logo -->
 <path fill="#fff" d="M16 741.3L22 740.5V747H16Z M23 740.3L32.2 739.2V747H23Z M16 748H22V754.6L16 753.8Z M23 748H32.2V756.2L23 754.9Z"/>
 <!-- search -->
 <circle cx="74.3" cy="745.4" r="5" fill="none" stroke="#fff" stroke-width="1.1"/>
 <path d="M70.6 749.3L64.2 755.6" stroke="#fff" stroke-width="1.2"/>
 <!-- S icon -->
 <path d="M166.3 742.8C166 738.5 170 737.6 174 737.6C177.5 737.6 180 738.3 180.3 740C180.5 741 180 742.3 179.3 743.2 M165.6 745.2C168.5 747 176 747.8 179.2 750.5C181.2 752.3 181 756 178 757.8C175 759.3 169 759.3 166 757.8C164 756.8 163.8 754.2 166.5 751.8" fill="none" stroke="url(#rb)" stroke-width="3.4" transform="translate(0 59.84) scale(1 0.92)"/>
 <!-- castle -->
 <g>
  <path d="M209.6 758.3L211 755.6H231L232.3 758.3Z" fill="#b8683a"/>
  <rect x="212.5" y="747.5" width="4" height="8" fill="#c4c4c4"/>
  <rect x="225.5" y="747" width="4.3" height="8.5" fill="#dcdcdc"/>
  <rect x="216.5" y="742.3" width="8.6" height="13" fill="#f2f2f2"/>
  <path d="M219 745.2H224M219.5 747H223.5M222 744V748.5" stroke="#8a8a8a" stroke-width="0.7"/>
  <path d="M212 748L214.3 742.5L216.6 748Z" fill="#d63a28"/>
  <path d="M225.6 747.5L227.8 742.8L230 747.5Z" fill="#e86a4a"/>
  <path d="M216.8 742.6L218.8 738L220.8 742.6Z M220.8 742.6L223 738L225.1 742.6Z" fill="#e24a32"/>
  <path d="M217.4 755.2V752.5A1.7 1.7 0 0 1 220.8 752.5V755.2Z" fill="#161616"/>
  <path d="M210.3 755.8C210.5 753 211.5 751 212.6 750.3C213.8 751 214.8 753 215 755.8Z" fill="#36a82e"/>
  <path d="M224.5 755.8C225.5 753.8 227 751.5 228.6 750C230 751.5 231.3 753.5 231.6 755.8Z" fill="#4cc23a"/>
 </g>
 <!-- snipping tool -->
 <g>
  <ellipse cx="269.3" cy="748" rx="10.4" ry="6" transform="rotate(-22 269.3 748)" fill="#a6a6a6" stroke="#d83030" stroke-width="0.8"/>
  <ellipse cx="270.6" cy="745.3" rx="10.4" ry="5.9" transform="rotate(-22 270.6 745.3)" fill="#f0f0f2" stroke="#d83030" stroke-width="0.8"/>
  <path d="M262.5 744.5L273 750.5M271.5 740.5L273.3 751" stroke="#8c8c8c" stroke-width="0.8" fill="none"/>
  <ellipse cx="273.6" cy="755.3" rx="2" ry="3.3" transform="rotate(15 273.6 755.3)" fill="none" stroke="#1a8ad8" stroke-width="1.5"/>
  <ellipse cx="279" cy="752.6" rx="3.2" ry="2" transform="rotate(35 279 752.6)" fill="none" stroke="#1a8ad8" stroke-width="1.5"/>
 </g>
 <!-- FL studio -->
 <circle cx="318.8" cy="747.6" r="9.9" fill="#1c2422" stroke="url(#flring)" stroke-width="2.6"/>
 <path d="M313 743.5C312.5 749 313.5 755 316 758.6C319.5 756 323.5 750 324.6 744.5C321 742.5 316 742.3 313 743.5Z" fill="url(#flo)"/>
 <path d="M312.8 742.5C314 740 318.5 739.2 321 740.8C323 740 325.5 741.5 326.3 745C323.5 746 317 745.8 312.8 742.5Z" fill="#86bc3c"/>
 <path d="M322.5 740.5L325.5 736.5" stroke="#6aa830" stroke-width="1.1"/>
 <!-- folder -->
 <path d="M357 739.5H365L366 740.5H378.3V757H357Z" fill="#ffe38c"/>
 <path d="M357 739.5H365L366.5 741.2H357Z" fill="#f2c44a"/>
 <path d="M361.3 757V751.5Q361.3 749 363.5 749H372.8Q375 749 375 751.5V757H372V752.5H364.3V757Z" fill="#38ade8"/>
 <!-- chrome -->
 <g transform="translate(416.8 747.8)">
  <circle r="12" fill="#e94335"/>
  <path d="M0 0L-10.4 -6A12 12 0 0 0 0 12Z" fill="#33a852"/>
  <path d="M0 0L0 12A12 12 0 0 0 10.4 -6Z" fill="#fbbd14"/>
  <path d="M0 0L10.4 -6H0Z" fill="#fbbd14"/>
  <path d="M0 -6L10.4 -6L5.2 3Z" fill="#fbbd14"/>
  <path d="M0 -6L-10.4 -6L-5.2 3Z" fill="#e94335"/>
  <path d="M-5.2 3L0 12L5.2 3Z" fill="#33a852"/>
  <path d="M5.2 3L0 12L4 12Z" fill="#fbbd14"/>
  <circle r="5.8" fill="#fff"/>
  <circle r="4.6" fill="#4285f4"/>
 </g>
 <!-- tray: people -->
 <g fill="none" stroke="#fff" stroke-width="1">
  <circle cx="1160.1" cy="749.3" r="2.8" stroke-width="1.1"/>
  <path d="M1156.3 755C1157.3 751.8 1162.9 751.8 1163.9 755" stroke-width="1.1"/>
  <circle cx="1166.3" cy="743" r="2.8" stroke-width="1.1"/>
  <path d="M1163.8 746.8C1165.5 745.8 1169 746 1170 749" stroke-width="1.1"/>
  <path d="M1193.2 750.7L1199 744.6L1204.8 750.7" stroke-width="1.3"/>
 </g>
 <!-- notification -->
 <path d="M1325 740H1341V753H1331L1329 755.5V753H1325Z" fill="#fff"/>
 <path d="M1327.5 743.5H1338.5M1327.5 746.5H1338.5M1327.5 749.5H1334" stroke="#222" stroke-width="1"/>
 <circle cx="1340.6" cy="755" r="8" fill="#2b2b2b" stroke="#8a8a8a" stroke-width="0.9"/>
 <rect x="1361" y="728" width="1" height="40" fill="#6a6a64"/>
</svg>
<div class="abs tray" style="left:1218px;top:741px;font-size:12.5px;transform:scaleX(0.9);transform-origin:0 0">РУС</div>
<div class="abs tray" style="left:1259px;top:732px;font-size:12px;transform:scaleX(0.91);transform-origin:0 0">13:34:11</div>
<div class="abs tray" style="left:1253px;top:750px;font-size:12px;transform:scaleX(0.9);transform-origin:0 0">15.02.2024</div>
<div class="abs tray" style="left:1336.8px;top:747px;font-size:13.5px">7</div>
</div>
</body></html>
